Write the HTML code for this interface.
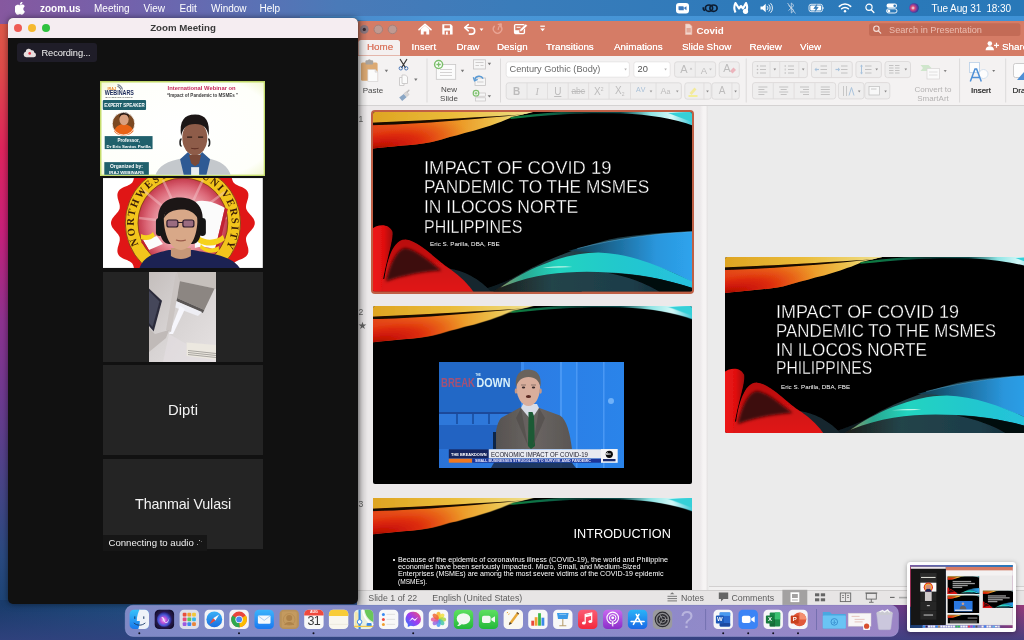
<!DOCTYPE html>
<html><head><meta charset="utf-8"><title>Screen</title>
<style>
*{margin:0;padding:0;box-sizing:border-box}
html,body{width:1024px;height:640px;overflow:hidden}
body{position:relative;font-family:"Liberation Sans",sans-serif;background:#3a4a8c;color:#fff}
.abs{position:absolute}
#pp,#zoom,#menubar,#dockt{will-change:transform}
#wall{left:0;top:0;width:1024px;height:640px;background:
 linear-gradient(90deg,rgba(0,0,0,0) 0,rgba(0,0,0,0) 100%),
 linear-gradient(180deg,#dc5a48 3%,#e04a4a 11%,#e0245c 23%,#c8207a 36%,#8e3290 50%,#6e3a90 62%,#4a4488 75%,#2a4a80 87%,#184272 97%);}
#wallb{left:0;top:600px;width:1024px;height:40px;background:linear-gradient(180deg,rgba(52,66,128,0) 15%,rgba(52,66,128,.8) 100%),linear-gradient(90deg,#1a3c6c 0,#1e4a7c 12%,#2a4a84 40%,#3b3f86 70%,#6a3a86 88%,#943a7a 100%)}
#wallt{left:0;top:0;width:1024px;height:24px;background:linear-gradient(90deg,#86589f 0,#7262ac 13%,#5c70b4 24%,#4a7ab8 33%,#3a7cba 50%,#2d7aba 75%,#2878b8 100%)}
/* menubar */
#menubar{left:0;top:0;width:1024px;height:16px;font-size:10px;line-height:17px;color:#fff;white-space:nowrap}
#menubar span{position:absolute;top:0}
/* zoom window */
#zoom{left:8px;top:18px;width:349.500px;height:585.500px;background:#111;border-radius:5px;overflow:hidden;box-shadow:0 0 6px rgba(0,0,0,.5)}
#ztitle{left:0;top:0;width:350px;height:20px;background:#f5edf1;color:#3a3a3a;font-weight:bold;font-size:9.700px;line-height:20px;text-align:center}
.tl{position:absolute;top:5.500px;width:8.400px;height:8.400px;border-radius:50%}
.tile{position:absolute;left:95px;width:160px;height:90px;background:#242424}
/* ppt */
#ppt{left:357px;top:20px;width:680px;height:585px;background:#ebebeb;border-radius:5px 0 0 0;overflow:hidden}
#ptitle{left:0;top:0;width:680px;height:36px;background:#d57c66}
#ribbon{left:0;top:36px;width:680px;height:50px;background:#f4f2f2;border-bottom:1px solid #d4d2d2}
#panel{left:0;top:86px;width:350px;height:484px;background:#ece9ea}
#status{left:0;top:570px;width:680px;height:15px;background:#e7e5e5;border-top:1px solid #cfcdcd;color:#666;font-size:8.5px;line-height:14px}
.pt{font-size:10.500px;line-height:19px;color:#fff;white-space:nowrap}
.tb{top:38px;font-size:9.850px;line-height:17px;color:#fff;white-space:nowrap;text-shadow:0 0 .5px #fff}
.rl{font-size:8px;line-height:11px;color:#4a4a4a;text-align:center;white-space:nowrap}
.rb{font-size:10px;line-height:15px;color:#bdbcbc;text-align:center;white-space:nowrap}
.st{white-space:nowrap;line-height:1;transform-origin:left center;font-family:'Liberation Sans',sans-serif}
.sn{font-size:8.600px;line-height:11px;color:#666}
.ss{top:590.500px;font-size:8.800px;line-height:14px;color:#5c5c5c;white-space:nowrap}
/* dock */
#dock{left:125px;top:606px;width:774px;height:31px;border-radius:8px;background:rgba(150,150,215,.78);border:1px solid rgba(200,200,240,.35)}
</style></head><body>
<!--SBG-->
<svg width="0" height="0" style="position:absolute"><defs>
<linearGradient id="gtl" gradientUnits="userSpaceOnUse" x1="0" y1="0" x2="160" y2="0"><stop offset="0" stop-color="#e2401a"/><stop offset=".3" stop-color="#ea6a1a"/><stop offset=".55" stop-color="#ec9a28"/><stop offset=".75" stop-color="#ecbe48"/><stop offset=".92" stop-color="#eedc80"/><stop offset="1" stop-color="#e8e0a0"/></linearGradient>
<radialGradient id="gtl2" gradientUnits="userSpaceOnUse" cx="0" cy="0" r="1" gradientTransform="translate(-8 42) rotate(-13) scale(105 27)"><stop offset="0" stop-color="#8a0a02"/><stop offset=".3" stop-color="#c81406"/><stop offset=".55" stop-color="#dc240a" stop-opacity=".85"/><stop offset=".8" stop-color="#e4400e" stop-opacity=".4"/><stop offset="1" stop-color="#e8601a" stop-opacity="0"/></radialGradient>
<linearGradient id="gtl3" gradientUnits="userSpaceOnUse" x1="0" y1="0" x2="160" y2="0"><stop offset="0" stop-color="#dea422"/><stop offset=".5" stop-color="#eabc3a"/><stop offset=".85" stop-color="#eed470"/><stop offset="1" stop-color="#eee094"/></linearGradient>
<linearGradient id="gtr" x1="0" y1="0" x2="1" y2="0"><stop offset="0" stop-color="#12803e"/><stop offset=".2" stop-color="#0e6a48"/><stop offset=".36" stop-color="#0a3a34"/><stop offset=".6" stop-color="#0c4a4a"/><stop offset=".76" stop-color="#8ee4e4"/><stop offset=".88" stop-color="#d4f8f8"/><stop offset="1" stop-color="#30c4d4"/></linearGradient>
<linearGradient id="gbl1" x1="0" y1="0" x2="1" y2="0"><stop offset="0" stop-color="#f01818"/><stop offset=".6" stop-color="#e01010"/><stop offset="1" stop-color="#a00c0c"/></linearGradient>
<linearGradient id="gbl2" x1="0" y1="0" x2="0" y2="1"><stop offset="0" stop-color="#b80e0e"/><stop offset=".5" stop-color="#d01212"/><stop offset="1" stop-color="#e21616"/></linearGradient>
<linearGradient id="gbr1" x1="0" y1="0" x2="1" y2="0"><stop offset="0" stop-color="#123a4a"/><stop offset=".35" stop-color="#1c6a98"/><stop offset=".7" stop-color="#2a96dc"/><stop offset="1" stop-color="#2ea4ee"/></linearGradient>
<linearGradient id="gbr2" x1="0" y1="0" x2="1" y2="0"><stop offset="0" stop-color="#8a9a6a"/><stop offset=".12" stop-color="#2aa890"/><stop offset=".3" stop-color="#22d4c0"/><stop offset=".6" stop-color="#20c8cc"/><stop offset="1" stop-color="#28c0e0"/></linearGradient>
<linearGradient id="gbr3" x1="0" y1="0" x2="1" y2="0"><stop offset="0" stop-color="#1a1a16"/><stop offset=".3" stop-color="#24444a"/><stop offset=".7" stop-color="#1c3c48"/><stop offset="1" stop-color="#0c2028"/></linearGradient>
<linearGradient id="gtent" x1="0" y1="0" x2="0" y2="1"><stop offset="0" stop-color="#240404"/><stop offset=".55" stop-color="#4a0808"/><stop offset="1" stop-color="#a00e0e"/></linearGradient>
<filter id="b1" x="-5%" y="-5%" width="110%" height="110%"><feGaussianBlur stdDeviation=".8"/></filter>
<filter id="b2" x="-30%" y="-30%" width="160%" height="160%"><feGaussianBlur stdDeviation="1.600"/></filter>
<clipPath id="sclip"><rect width="320" height="180"/></clipPath>
<symbol id="sbgt" viewBox="0 0 320 180" preserveAspectRatio="none">
<rect width="320" height="180" fill="#000"/>
<g clip-path="url(#sclip)">
<g filter="url(#b1)">
<path d="M-2 -2H170C160 0 152 2 140 5C134 7.500 130 9.500 125 11C120 13 115 14.500 110 16C104 18 98 19.500 92 21C87 22.500 82 24 77 25C71 26.800 65 28.600 59 30C49 32 40 32.800 30 33.500C20 34.500 10 35.500 -2 36.800Z" fill="url(#gtl)"/>
<path d="M-2 -2H170C160 0 152 2 140 5C134 7.500 130 9.500 125 11C120 13 115 14.500 110 16C104 18 98 19.500 92 21C87 22.500 82 24 77 25C71 26.800 65 28.600 59 30C49 32 40 32.800 30 33.500C20 34.500 10 35.500 -2 36.800Z" fill="url(#gtl2)"/>
<path d="M-2 -2H170C160 0 155 1.500 150 2.500C100 5.500 40 9.500 -2 11Z" fill="url(#gtl3)"/>
<path d="M-2 10.800C40 9 95 5.800 150 2.500C100 7.500 40 12.600 -2 13.200z" fill="#140700"/>
<path d="M138 5C165 1.500 195 -1 230 -2H322V14C302 6.500 277 2.600 250 1.600C215 .3 180 2.500 138 7z" fill="url(#gtr)"/>
<path d="M296 1l24 9v-10z" fill="#35d0d8"/>
</g>
</g>
</symbol>
<symbol id="sbg" viewBox="0 0 320 180" preserveAspectRatio="none">
<use href="#sbgt" width="320" height="180"/>
<g clip-path="url(#sclip)">
<!-- bottom left -->
<g filter="url(#b1)">
<path d="M96 182C120 176 140 168 160 156L200 150 210 182z" fill="#101a20"/><path d="M76 157C90 159 106 166 120 182H98C94 172 86 164 76 157Z" fill="#17272e"/>
<path d="M-2 182V172C30 158 75 160 102 182z" fill="#dc1414"/>
<path d="M10 182C12 150 20 127 33 128C48 130 62 148 78 158C88 165 96 173 102 182Z" fill="url(#gbl2)"/>
<path d="M-2 118C5 112 16 112 19.500 120C21 130 12 150 8 182H-2Z" fill="url(#gbl1)"/>
</g>
<path d="M13 170C17 152 24 137 33 136.500C44 138.500 57 150 69 159C50 160 30 164 13 170Z" fill="#3c0808" filter="url(#b2)"/>
<!-- bottom right -->
<g filter="url(#b1)">
<path d="M118 182C150 158 190 140 237 128C265 122.500 295 120.500 322 120V182Z" fill="url(#gbr3)"/>
<path d="M196 139.500C237 127.500 290 121 322 120V172C295 156 250 140 196 139.500Z" fill="url(#gbr1)"/><path d="M205 137C245 126.500 290 121 322 120" fill="none" stroke="#6ec4ee" stroke-opacity=".55" stroke-width=".7"/>
<path d="M128 176C150 160 190 141 226 141C262 142 295 158 322 171V177C292 167 262 162 237 161C200 159 165 161 128 176Z" fill="url(#gbr2)"/>
<path d="M236 161.500C262 162 292 167 322 177V182H290C275 172 255 165 236 161.500z" fill="#04080a"/>
<path d="M170 156C185 154.500 195 154.500 200 155.500C190 156 180 156.500 170 156z" fill="#baf4e8"/>
</g>
</g>
</symbol>
</defs></svg>
<!--/SBG-->
<div id="wall" class="abs"></div>
<div id="wallb" class="abs"></div>
<div id="wallt" class="abs"></div>
<!--MENUBAR-->
<div id="menubar" class="abs">
<svg class="abs" style="left:15px;top:1.5px" width="11" height="13" viewBox="0 0 170 200"><path fill="#fff" d="M150 68c-9 6-22 18-22 41 0 27 23 37 24 37-1 3-5 16-15 29-8 11-17 23-30 23s-17-8-32-8-20 8-32 8-21-11-31-25C1 157-8 130-8 104c0-41 27-63 53-63 14 0 26 9 34 9s21-10 37-10c6 0 27 1 34 28zM105 28c6-8 11-18 11-29v-4c-11 0-23 7-31 16-6 7-11 17-11 28l1 4c11 1 23-6 30-15z"/></svg>
<span style="left:40px;font-weight:bold">zoom.us</span>
<span style="left:94px">Meeting</span>
<span style="left:143.5px">View</span>
<span style="left:179.5px">Edit</span>
<span style="left:211px">Window</span>
<span style="left:259.5px">Help</span>
<svg class="abs" style="left:660px;top:0" width="270" height="16" viewBox="0 0 270 16">
<!-- zoom cam -->
<rect x="16" y="3" width="13" height="10.5" rx="3" fill="#fff"/><path d="M18.5 6.2h4.3a1 1 0 0 1 1 1v3h-4.3a1 1 0 0 1-1-1zM24.3 7.6l2.2-1.4v4l-2.2-1.4z" fill="#3a78be"/>
<!-- CC -->
<g fill="none" stroke="#0d1c30" stroke-width="1.7"><ellipse cx="49" cy="8.2" rx="3.6" ry="3.2"/><ellipse cx="53.5" cy="8.2" rx="3.6" ry="3.2"/><path d="M45 10.5c-1.5-.3-2-1.800-1.500-3.200"/></g>
<!-- malwarebytes -->
<path d="M75.500 12.500c-1.500-3-1.500-6.500 0-9.500l3.500 5.500 2-2.500 2 2.500 3-5.500c1.500 3 1.300 5.500.5 7.500" fill="none" stroke="#fff" stroke-width="2.100" stroke-linejoin="round"/><circle cx="85.500" cy="11.300" r="2.600" fill="#fff"/>
<!-- volume -->
<path d="M100.500 6.500h2.200l3-2.700v8.400l-3-2.700h-2.200z" fill="#fff"/><path d="M107.300 6.200a2.500 2.500 0 0 1 0 3.600M109 4.800a4.600 4.600 0 0 1 0 6.400M110.800 3.500a6.500 6.500 0 0 1 0 9" fill="none" stroke="#fff" stroke-width=".9" stroke-linecap="round"/>
<!-- bluetooth off -->
<path d="M128.500 5.500l5.500 5-2.700 2.500v-10l2.700 2.500-5.500 5" fill="none" stroke="#c8d8ea" stroke-width=".8"/><path d="M127.500 3l8 10.500" stroke="#c8d8ea" stroke-width=".8"/>
<!-- battery -->
<rect x="149" y="4.300" width="13.500" height="7.400" rx="2" fill="none" stroke="#e8eef6" stroke-width=".9"/><rect x="150.300" y="5.600" width="10.900" height="4.800" rx="1" fill="#fff"/><path d="M163.300 6.700v2.600c.9-.2.900-2.400 0-2.600z" fill="#e8eef6"/><path d="M156.800 4.500l-3 4h2.200l-1 3 3.200-4.200H156z" fill="#2c76b6" stroke="#2c76b6" stroke-width=".6"/>
<!-- wifi -->
<g fill="none" stroke="#fff" stroke-width="1.500" stroke-linecap="round"><path d="M179.300 6.400a8 8 0 0 1 11.400 0"/><path d="M181.600 8.800a4.800 4.800 0 0 1 6.800 0"/></g><circle cx="185" cy="11.300" r="1.200" fill="#fff"/>
<!-- search -->
<circle cx="209" cy="7.300" r="3.100" fill="none" stroke="#fff" stroke-width="1.200"/><path d="M211.300 9.700l2.600 2.800" stroke="#fff" stroke-width="1.300" stroke-linecap="round"/>
<!-- control center -->
<rect x="226.500" y="3.600" width="10.500" height="4.200" rx="2.100" fill="#fff"/><circle cx="234.700" cy="5.700" r="1.300" fill="#2c76b6"/><rect x="226.500" y="8.800" width="10.500" height="4.200" rx="2.100" fill="none" stroke="#fff" stroke-width=".9"/><circle cx="228.800" cy="10.900" r="1.500" fill="#fff"/>
<!-- siri -->
<defs><radialGradient id="siri" cx=".4" cy=".5" r=".6"><stop offset="0" stop-color="#f2f2f8"/><stop offset=".35" stop-color="#d94a78"/><stop offset=".7" stop-color="#6a3aa0"/><stop offset="1" stop-color="#2a3a88"/></radialGradient></defs>
<circle cx="254" cy="8" r="4.800" fill="url(#siri)"/>
</svg>
<span style="left:931.500px;letter-spacing:-.12px">Tue Aug 31&nbsp; 18:30</span>
</div>
<!--PPT-->
<div id="ppt" class="abs">
<div id="ptitle" class="abs"></div>
<div id="ribbon" class="abs"></div>
<div id="panel" class="abs"></div>
<div class="abs" style="left:343px;top:86px;width:8px;height:484px;background:linear-gradient(90deg,#ece9ea,#f6f4f4 40%,#f6f4f4 70%,#e2e0e0)"></div>
<div id="eline" class="abs" style="left:352px;top:566px;width:330px;height:4px;background:#f1f0f0;border-top:1px solid #d2d0d0"></div>
<div id="status" class="abs"></div>
</div>
<div id="wallt2" class="abs" style="left:300px;top:16px;width:724px;height:5px;background:linear-gradient(90deg,#4a86c8,#4a96d6 20%,#3f92d6 100%)"></div>
<div id="pp" class="abs" style="left:0;top:0;width:1024px;height:640px;overflow:hidden;pointer-events:none">
<!--PPTITLE-->
<svg class="abs" style="left:357px;top:20px" width="667" height="36" viewBox="357 20 667 36">
<!-- window buttons -->
<circle cx="364.300" cy="29.400" r="4.300" fill="#8d7a82"/><circle cx="364.300" cy="29.400" r="1.600" fill="#3a2c34"/>
<circle cx="378.300" cy="29.400" r="4.300" fill="#bf9a92"/><circle cx="392.500" cy="29.400" r="4.300" fill="#bf9a92"/>
<circle cx="378.300" cy="29.400" r="4.300" fill="none" stroke="#a57f78" stroke-width="1"/><circle cx="392.500" cy="29.400" r="4.300" fill="none" stroke="#a57f78" stroke-width="1"/>
<!-- home -->
<path d="M419 29.700l6-5.400 6 5.400" fill="none" stroke="#fff" stroke-width="1.600" stroke-linejoin="round" stroke-linecap="round"/><path d="M420.800 29.300l4.200-3.700 4.200 3.700v5.300h-2.900v-3.200h-2.600v3.200h-2.900z" fill="#fff"/>
<!-- save -->
<path d="M442.300 24.200h8.600l1.700 1.700v8.700h-10.300z" fill="#fff"/><rect x="444.300" y="25.300" width="5.600" height="2.900" fill="#d67a63"/><rect x="444.600" y="30.600" width="5.400" height="4" fill="#d67a63"/><rect x="446" y="31.600" width="1.800" height="3" fill="#fff"/>
<!-- undo -->
<path d="M466 27.700h5.500a3.200 3.200 0 0 1 0 6.400h-2.200" fill="none" stroke="#fff" stroke-width="1.600" stroke-linecap="round"/><path d="M468.300 24.600l-3.600 3.100 3.600 3.100" fill="none" stroke="#fff" stroke-width="1.600" stroke-linecap="round" stroke-linejoin="round"/>
<path d="M479.600 28.600h3.800l-1.900 2.400z" fill="#fff"/>
<!-- redo faded -->
<path d="M494.300 26.300a4.200 4.200 0 1 0 6.500 0" fill="none" stroke="#e9a595" stroke-width="1.400" stroke-linecap="round"/><path d="M498.200 24.300l3-0.300-.1 3.100" fill="none" stroke="#e9a595" stroke-width="1.300" stroke-linecap="round" stroke-linejoin="round"/><path d="M501 24.300c-1.500 1.200-2.500 3-2.800 5" fill="none" stroke="#e9a595" stroke-width="1.300" stroke-linecap="round"/>
<!-- edit -->
<rect x="514.600" y="24.600" width="9.800" height="9" rx="1" fill="none" stroke="#fff" stroke-width="1.400"/><rect x="515" y="30.200" width="4.500" height="3.200" fill="#fff"/><path d="M519.300 31.800l.8-2.600 5.600-5.200 1.800 1.800-5.600 5.200z" fill="#fff" stroke="#d67a63" stroke-width=".6"/><path d="M516.500 27.300h4" stroke="#fff" stroke-width="1"/>
<!-- customize -->
<path d="M540.300 26.200h4.600" stroke="#fff" stroke-width="1.200"/><path d="M540.300 28.400h4.600l-2.300 2.800z" fill="#fff"/>
<!-- doc icon -->
<path d="M685.500 24h4l2.300 2.300v8.200h-6.300z" fill="#f3d6cd" stroke="#e9bfb3" stroke-width=".6"/><path d="M686.500 28h4.300v4.500h-4.300z" fill="#e2a898"/>
<!-- search box -->
<rect x="869" y="23.300" width="151.500" height="12.600" rx="2.500" fill="#c36b56"/>
<circle cx="876.400" cy="28.700" r="2.700" fill="none" stroke="#f6e0da" stroke-width="1.100"/><path d="M878.400 30.800l2.300 2.400" stroke="#f6e0da" stroke-width="1.200" stroke-linecap="round"/>
<!-- home tab -->
<path d="M358.500 55.500v-13a2.500 2.500 0 0 1 2.500-2.500h36.500a2.500 2.500 0 0 1 2.500 2.500v13z" fill="#f4f0f0"/>
<!-- share icon -->
<circle cx="989.800" cy="43.600" r="2.300" fill="#fff"/><path d="M985.600 50.300c0-2.600 1.800-4 4.200-4s4.200 1.400 4.200 4z" fill="#fff"/><path d="M996.500 42.800v5M994 45.300h5" stroke="#fff" stroke-width="1.200"/>
</svg>
<div class="abs pt" style="left:696.500px;top:20.500px;font-weight:bold;font-size:9.800px">Covid</div>
<div class="abs pt" style="left:889px;top:20.700px;color:#ecbdb0;font-size:9.200px">Search in Presentation</div>
<div class="abs tb" style="left:367px;color:#db7862;text-shadow:0 0 .5px #db7862">Home</div>
<div class="abs tb" style="left:411.500px">Insert</div>
<div class="abs tb" style="left:456.500px">Draw</div>
<div class="abs tb" style="left:497px">Design</div>
<div class="abs tb" style="left:546px">Transitions</div>
<div class="abs tb" style="left:614px">Animations</div>
<div class="abs tb" style="left:682px">Slide Show</div>
<div class="abs tb" style="left:749.500px">Review</div>
<div class="abs tb" style="left:800px">View</div>
<div class="abs tb" style="left:1002px">Share</div>
<!--PPRIBBON-->
<svg class="abs" style="left:357px;top:56px" width="667" height="50" viewBox="357 56 667 50">
<rect x="361" y="62.500" width="16.600" height="18.300" rx="1.500" fill="#dcaa74"/><rect x="365.500" y="60.300" width="7.600" height="4.200" rx="1" fill="#a8a4a0"/><circle cx="369.300" cy="60.800" r="1.500" fill="#a8a4a0"/><path d="M367.800 69.500h7.300l2.700 2.700v9.300h-10z" fill="#fbfbfb" stroke="#d0cccc" stroke-width=".6"/><path d="M375.100 69.500v2.700h2.700" fill="#e6e4e4" stroke="#d0cccc" stroke-width=".5"/>
<path d="M384.7 69.8h3.4l-1.7 2.4z" fill="#777"/>
<path d="M400.300 59.500l5 8M406.700 59.500l-5 8" stroke="#333" stroke-width="1.200" stroke-linecap="round"/><circle cx="400.800" cy="68.300" r="1.700" fill="none" stroke="#4a78b8" stroke-width="1"/><circle cx="406.200" cy="68.300" r="1.700" fill="none" stroke="#4a78b8" stroke-width="1"/>
<path d="M399.500 77.500h4.500v8h-4.500z" fill="#fafafa" stroke="#c4c2c2" stroke-width=".8"/><path d="M402 75h3.500l2 2v6.500h-5.500z" fill="#fafafa" stroke="#c4c2c2" stroke-width=".8"/>
<path d="M414.1 78.5h3.4l-1.7 2.4z" fill="#777"/>
<path d="M399.200 97.500l4.500-3.500 2.800 3.200-4.300 3.800z" fill="#8aa6c4"/><path d="M404 93.600l2.500-2 2.600 3-2.400 2.100z" fill="#d8d6d6" stroke="#bcbaba" stroke-width=".5"/><path d="M407.300 92l1.600-1.800" stroke="#bcbaba" stroke-width="1.400" stroke-linecap="round"/>
<path d="M427 58.500v44" stroke="#dcdada" stroke-width="1"/>
<rect x="436.300" y="64.500" width="19.400" height="14.800" fill="#fbfbfb" stroke="#c8c6c6" stroke-width=".8"/><path d="M440 69.500h12M440 72.500h12M440 75.500h12" stroke="#cfcdcd" stroke-width=".9"/><circle cx="438.600" cy="64.500" r="4" fill="#fff" stroke="#7cbf6c" stroke-width="1.500"/><path d="M438.600 62.300v4.400M436.400 64.500h4.400" stroke="#7cbf6c" stroke-width="1.300"/>
<path d="M460.8 69.8h3.4l-1.7 2.4z" fill="#777"/>
<rect x="473.500" y="59.800" width="12" height="9.200" fill="#f6f6f6" stroke="#c6c4c4" stroke-width=".8"/><path d="M475.500 62.500h8M475.500 65.500h3.500M480.500 65.500h3" stroke="#cfcdcd" stroke-width="1"/>
<path d="M487.7 62.8h3.4l-1.7 2.4z" fill="#777"/>
<rect x="475" y="78" width="10.500" height="7.500" fill="#f6f6f6" stroke="#c6c4c4" stroke-width=".8"/><path d="M477 82h6.500" stroke="#cfcdcd" stroke-width="1"/><path d="M474.800 79.800c.5-4 6.500-5 8.200-1.200" fill="none" stroke="#5a9ad4" stroke-width="1.500"/><path d="M473.300 77.300l1.200 3.600 3.200-1.600" fill="none" stroke="#5a9ad4" stroke-width="1.300"/>
<rect x="475.500" y="93" width="10" height="3.200" fill="#f6f6f6" stroke="#c6c4c4" stroke-width=".7"/><rect x="475.500" y="97.800" width="10" height="3.200" fill="#f6f6f6" stroke="#c6c4c4" stroke-width=".7"/><circle cx="476" cy="93.200" r="2.800" fill="#fff" stroke="#7cbf6c" stroke-width="1.200"/><path d="M476 91.700v3M474.500 93.200h3" stroke="#7cbf6c" stroke-width="1"/>
<path d="M487.7 95.2h3.4l-1.7 2.4z" fill="#777"/>
<path d="M500.5 58.500v44" stroke="#dcdada" stroke-width="1"/>
<rect x="506.200" y="61.800" width="123.200" height="15.400" rx="2.500" fill="#fff" stroke="#e2e0e0" stroke-width=".8"/>
<path d="M624.3 68.5h2.6l-1.3 2.0z" fill="#b5b3b3"/>
<rect x="633.800" y="61.800" width="36.400" height="15.400" rx="2.500" fill="#fff" stroke="#e2e0e0" stroke-width=".8"/>
<path d="M664.3 68.5h2.6l-1.3 2.0z" fill="#b5b3b3"/>
<rect x="674.6" y="61.8" width="41.0" height="15.4" rx="2.500" fill="#efeeee" stroke="#d9d7d7" stroke-width=".8"/><path d="M695.3 61.8v15.4" stroke="#dddbdb" stroke-width=".8"/>
<rect x="719.2" y="61.8" width="20.1" height="15.4" rx="2.500" fill="#efeeee" stroke="#d9d7d7" stroke-width=".8"/>
<path d="M689.7 69.5h2.6l-1.3 -2.0z" fill="#bdbcbc"/>
<path d="M709.2 68.5h2.6l-1.3 2.0z" fill="#bdbcbc"/>
<path d="M730 71l3.500-3.500 2.500 2.500-3.500 3.500z" fill="#ecb4bc"/>
<rect x="506.2" y="82.8" width="175.2" height="16.4" rx="2.500" fill="#efeeee" stroke="#d9d7d7" stroke-width=".8"/><path d="M527 82.8v16.4" stroke="#dddbdb" stroke-width=".8"/><path d="M547.5 82.8v16.4" stroke="#dddbdb" stroke-width=".8"/><path d="M568.2 82.8v16.4" stroke="#dddbdb" stroke-width=".8"/><path d="M588.6 82.8v16.4" stroke="#dddbdb" stroke-width=".8"/><path d="M609 82.8v16.4" stroke="#dddbdb" stroke-width=".8"/><path d="M630.5 82.8v16.4" stroke="#dddbdb" stroke-width=".8"/><path d="M656 82.8v16.4" stroke="#dddbdb" stroke-width=".8"/>
<path d="M649.7 90.5h2.6l-1.3 2.0z" fill="#9a9898"/>
<path d="M676.0 90.5h2.6l-1.3 2.0z" fill="#9a9898"/>
<rect x="684.8" y="82.8" width="26.4" height="16.4" rx="2.500" fill="#efeeee" stroke="#d9d7d7" stroke-width=".8"/><path d="M703.9 82.8v16.4" stroke="#dddbdb" stroke-width=".8"/>
<rect x="711.9" y="82.8" width="27.4" height="16.4" rx="2.500" fill="#efeeee" stroke="#d9d7d7" stroke-width=".8"/><path d="M731.9 82.8v16.4" stroke="#dddbdb" stroke-width=".8"/>
<path d="M706.2 90.5h2.6l-1.3 2.0z" fill="#8a8888"/>
<path d="M734.3 90.5h2.6l-1.3 2.0z" fill="#8a8888"/>
<path d="M689.500 93l5-5.500 2 2-5 5.500z" fill="#f3ea9c"/><rect x="688.500" y="95" width="9" height="2" fill="#f3ee9a"/>
<path d="M746.2 58.500v44" stroke="#dcdada" stroke-width="1"/>
<rect x="752.5" y="61.5" width="54.9" height="16.1" rx="2.500" fill="#efeeee" stroke="#d9d7d7" stroke-width=".8"/><path d="M770 61.5v16.1" stroke="#dddbdb" stroke-width=".8"/><path d="M779.7 61.5v16.1" stroke="#dddbdb" stroke-width=".8"/><path d="M798.8 61.5v16.1" stroke="#dddbdb" stroke-width=".8"/>
<path d="M773.5 68.5h2.6l-1.3 2.0z" fill="#8a8888"/>
<path d="M801.9 68.5h2.6l-1.3 2.0z" fill="#8a8888"/>
<circle cx="757.500" cy="66" r=".8" fill="#bdbcbc"/><path d="M760 66h6" stroke="#bdbcbc" stroke-width=".9"/>
<path d="M785.200 65v2" stroke="#bdbcbc" stroke-width=".8"/><path d="M788 66h6" stroke="#bdbcbc" stroke-width=".9"/>
<circle cx="757.500" cy="69.5" r=".8" fill="#bdbcbc"/><path d="M760 69.5h6" stroke="#bdbcbc" stroke-width=".9"/>
<path d="M785.200 68.5v2" stroke="#bdbcbc" stroke-width=".8"/><path d="M788 69.5h6" stroke="#bdbcbc" stroke-width=".9"/>
<circle cx="757.500" cy="73" r=".8" fill="#bdbcbc"/><path d="M760 73h6" stroke="#bdbcbc" stroke-width=".9"/>
<path d="M785.200 72v2" stroke="#bdbcbc" stroke-width=".8"/><path d="M788 73h6" stroke="#bdbcbc" stroke-width=".9"/>
<rect x="811.5" y="61.5" width="40.8" height="16.1" rx="2.500" fill="#efeeee" stroke="#d9d7d7" stroke-width=".8"/><path d="M831.5 61.5v16.1" stroke="#dddbdb" stroke-width=".8"/>
<path d="M820.5 66h6.500" stroke="#bdbcbc" stroke-width=".9"/>
<path d="M820.5 69.5h6.500" stroke="#bdbcbc" stroke-width=".9"/>
<path d="M820.5 73h6.500" stroke="#bdbcbc" stroke-width=".9"/>
<path d="M815.0 69.500h4" stroke="#a9c3dc" stroke-width="1.200"/>
<path d="M816.5 67.500l-2 2 2 2z" fill="#a9c3dc"/>
<path d="M841 66h6.500" stroke="#bdbcbc" stroke-width=".9"/>
<path d="M841 69.5h6.500" stroke="#bdbcbc" stroke-width=".9"/>
<path d="M841 73h6.500" stroke="#bdbcbc" stroke-width=".9"/>
<path d="M835.5 69.500h4" stroke="#a9c3dc" stroke-width="1.200"/>
<path d="M838 67.500l2 2-2 2z" fill="#a9c3dc"/>
<rect x="855.9" y="61.5" width="25.5" height="16.1" rx="2.500" fill="#efeeee" stroke="#d9d7d7" stroke-width=".8"/>
<path d="M875.4 68.5h2.6l-1.3 2.0z" fill="#8a8888"/>
<path d="M861.500 65v9" stroke="#a9c3dc" stroke-width="1"/><path d="M860 66.500l1.500-2 1.500 2zM860 72.500l1.500 2 1.500-2z" fill="#a9c3dc"/>
<path d="M865 66h6.500" stroke="#bdbcbc" stroke-width=".9"/>
<path d="M865 69.5h6.500" stroke="#bdbcbc" stroke-width=".9"/>
<path d="M865 73h6.500" stroke="#bdbcbc" stroke-width=".9"/>
<rect x="885" y="61.5" width="25.5" height="16.1" rx="2.500" fill="#efeeee" stroke="#d9d7d7" stroke-width=".8"/>
<path d="M904.5 68.5h2.6l-1.3 2.0z" fill="#8a8888"/>
<path d="M889 65.5h4.500M895 65.5h4.500" stroke="#bdbcbc" stroke-width=".9"/>
<path d="M889 68h4.500M895 68h4.500" stroke="#bdbcbc" stroke-width=".9"/>
<path d="M889 70.5h4.500M895 70.5h4.500" stroke="#bdbcbc" stroke-width=".9"/>
<path d="M889 73h4.500M895 73h4.500" stroke="#bdbcbc" stroke-width=".9"/>
<rect x="752.5" y="82.6" width="83.2" height="16.3" rx="2.500" fill="#efeeee" stroke="#d9d7d7" stroke-width=".8"/><path d="M773.3 82.6v16.3" stroke="#dddbdb" stroke-width=".8"/><path d="M794.1 82.6v16.3" stroke="#dddbdb" stroke-width=".8"/><path d="M814.9 82.6v16.3" stroke="#dddbdb" stroke-width=".8"/>
<path d="M758.4 87h9" stroke="#bdbcbc" stroke-width=".9"/>
<path d="M758.4 89.5h6" stroke="#bdbcbc" stroke-width=".9"/>
<path d="M758.4 92h9" stroke="#bdbcbc" stroke-width=".9"/>
<path d="M758.4 94.5h6" stroke="#bdbcbc" stroke-width=".9"/>
<path d="M779.2 87h9" stroke="#bdbcbc" stroke-width=".9"/>
<path d="M780.7 89.5h6" stroke="#bdbcbc" stroke-width=".9"/>
<path d="M779.2 92h9" stroke="#bdbcbc" stroke-width=".9"/>
<path d="M780.7 94.5h6" stroke="#bdbcbc" stroke-width=".9"/>
<path d="M800.0 87h9" stroke="#bdbcbc" stroke-width=".9"/>
<path d="M803.0 89.5h6" stroke="#bdbcbc" stroke-width=".9"/>
<path d="M800.0 92h9" stroke="#bdbcbc" stroke-width=".9"/>
<path d="M803.0 94.5h6" stroke="#bdbcbc" stroke-width=".9"/>
<path d="M820.8 87h9" stroke="#bdbcbc" stroke-width=".9"/>
<path d="M820.8 89.5h9" stroke="#bdbcbc" stroke-width=".9"/>
<path d="M820.8 92h9" stroke="#bdbcbc" stroke-width=".9"/>
<path d="M820.8 94.5h9" stroke="#bdbcbc" stroke-width=".9"/>
<rect x="838.4" y="82.6" width="25.6" height="16.3" rx="2.500" fill="#efeeee" stroke="#d9d7d7" stroke-width=".8"/>
<path d="M857.9 90.5h2.6l-1.3 2.0z" fill="#8a8888"/>
<path d="M843.500 86v10M846.500 86v10" stroke="#bdbcbc" stroke-width=".8"/><path d="M849 95.500l2.500-8 2.500 8" fill="none" stroke="#a9c3dc" stroke-width="1"/>
<rect x="864.8" y="82.6" width="25.0" height="16.3" rx="2.500" fill="#efeeee" stroke="#d9d7d7" stroke-width=".8"/>
<path d="M884.3 90.5h2.6l-1.3 2.0z" fill="#8a8888"/>
<rect x="869" y="86.500" width="10.500" height="8.500" fill="#f8f8f8" stroke="#bdbcbc" stroke-width=".7"/><path d="M871 89h5.500" stroke="#bdbcbc" stroke-width=".8"/>
<path d="M920.500 65h8l3 3-3 3h-8l2.500-3z" fill="#cfe6cc"/><rect x="927" y="68.500" width="12.500" height="10.500" fill="#fafafa" stroke="#d6d4d4" stroke-width=".7"/><path d="M929 72h8.500M929 75h8.500" stroke="#dedcdc" stroke-width=".9"/>
<path d="M943.7 70.1h3.0l-1.5 2.2z" fill="#8a8888"/>
<path d="M959.6 58.500v44" stroke="#dcdada" stroke-width="1"/>
<rect x="969.500" y="62.500" width="10" height="10" fill="#fdfdfd" stroke="#b8cfe6" stroke-width=".8"/><circle cx="983.500" cy="74" r="4.500" fill="#fdfdfd" stroke="#c9d9ea" stroke-width=".8"/><path d="M970.300 81.500l4.700-12.500h1.600l4.700 12.500M972.200 77.500h7" fill="none" stroke="#4d8fd6" stroke-width="1.500"/>
<path d="M992.2 69.9h3.0l-1.5 2.2z" fill="#777"/>
<path d="M1005.7 58.500v44" stroke="#dcdada" stroke-width="1"/>
<rect x="1013.500" y="63.500" width="14" height="14" rx="2" fill="#fdfdfd" stroke="#c2c0c0" stroke-width=".8"/><path d="M1017 80l7-8v8z" fill="#4d8fd6"/>
</svg>
<div class="abs rl" style="left:357px;width:32px;top:85px">Paste</div>
<div class="abs rl" style="left:429px;width:40px;top:85px;line-height:8.700px;padding-top:1px">New<br>Slide</div>
<div class="abs rl" style="left:903px;width:60px;top:85px;line-height:8.300px;padding-top:1.300px;color:#b4b2b2">Convert to<br>SmartArt</div>
<div class="abs rl" style="left:961px;width:40px;top:85px;color:#3c3c3c;text-shadow:0 0 .2px #3c3c3c">Insert</div>
<div class="abs rl" style="left:1012.500px;top:85px;color:#3c3c3c;text-align:left;text-shadow:0 0 .4px #3c3c3c">Drawing</div>
<div class="abs" style="left:509.500px;top:62px;font-size:9.200px;line-height:15px;color:#6a6a6a;white-space:nowrap">Century Gothic (Body)</div>
<div class="abs" style="left:637.500px;top:62px;font-size:9.300px;line-height:15px;color:#555;white-space:nowrap">20</div>
<div class="abs rb" style="left:677px;top:62px;width:14px;font-size:11px">A</div>
<div class="abs rb" style="left:698px;top:63px;width:12px;font-size:9.500px">A</div>
<div class="abs rb" style="left:721px;top:61px;width:12px;font-size:11px">A</div>
<div class="abs rb" style="left:506px;top:83.500px;width:21px;font-weight:bold">B</div>
<div class="abs rb" style="left:527px;top:83.500px;width:20.500px;font-style:italic;font-family:'Liberation Serif',serif">I</div>
<div class="abs rb" style="left:547.500px;top:83.500px;width:20.500px;text-decoration:underline">U</div>
<div class="abs rb" style="left:568px;top:83.500px;width:20.500px;text-decoration:line-through;font-size:8.500px">abc</div>
<div class="abs rb" style="left:588.500px;top:83.500px;width:20.500px">X<span style="font-size:5px;position:relative;top:-4px">2</span></div>
<div class="abs rb" style="left:609px;top:83px;width:21.500px">X<span style="font-size:5px;position:relative;top:2px">2</span></div>
<div class="abs rb" style="left:630.500px;top:82px;width:21px;font-size:7px;letter-spacing:.5px;color:#a8c0d8">AV</div>
<div class="abs rb" style="left:656px;top:84px;width:19px;font-size:9px">A<span style="font-size:7px">a</span></div>
<div class="abs rb" style="left:714px;top:82.500px;width:16px;font-size:10px">A</div>
<!--PPSLIDES-->
<div class="abs" style="left:370.800px;top:110.200px;width:323.400px;height:183.600px;border-radius:4px;background:#bf5f45"></div>
<svg class="abs" style="left:373px;top:112.4px;border-radius:2px" width="319" height="179.4"><use href="#sbg" width="319" height="179.4"/></svg>
<div class="abs st" style="left:423.9px;top:158.63px;font-size:18.4px;transform:scaleX(1.0002);color:#fff;-webkit-text-stroke:.3px #000">IMPACT OF COVID 19</div>
<div class="abs st" style="left:423.9px;top:178.33px;font-size:18.4px;transform:scaleX(0.9395);color:#fff;-webkit-text-stroke:.3px #000">PANDEMIC TO THE MSMES</div>
<div class="abs st" style="left:423.9px;top:198.03px;font-size:18.4px;transform:scaleX(0.9516);color:#fff;-webkit-text-stroke:.3px #000">IN ILOCOS NORTE</div>
<div class="abs st" style="left:423.9px;top:217.73px;font-size:18.4px;transform:scaleX(0.8664);color:#fff;-webkit-text-stroke:.3px #000">PHILIPPINES</div>
<div class="abs st" style="left:429.8px;top:241.20px;font-size:6.2px;transform:scaleX(1.0134);transform-origin:left center;color:#fff">Eric S. Parilla, DBA, FBE</div>
<div class="abs sn" style="left:358.500px;top:113.500px">1</div>
<div class="abs sn" style="left:358.500px;top:306.500px">2</div>
<div class="abs sn" style="left:357.500px;top:319.500px;font-size:9.500px">★</div>
<div class="abs sn" style="left:358.500px;top:498.500px">3</div>
<svg class="abs" style="left:373.2px;top:305.5px;border-radius:2px" width="319.3" height="178.6"><use href="#sbgt" width="319.3" height="178.6"/></svg>
<!--VIDEO-->
<svg class="abs" style="left:438.800px;top:362.300px" width="185.600" height="106" viewBox="0 0 185.600 106">
<defs>
<linearGradient id="vbg" x1="0" y1="0" x2="1" y2="0"><stop offset="0" stop-color="#2a72d6"/><stop offset=".45" stop-color="#2c7ce4"/><stop offset="1" stop-color="#2a84ea"/></linearGradient>
<linearGradient id="vsuit" x1="0" y1="0" x2="1" y2="0"><stop offset="0" stop-color="#565250"/><stop offset=".5" stop-color="#6a6562"/><stop offset="1" stop-color="#5a5654"/></linearGradient>
<filter id="vb" x="-10%" y="-10%" width="120%" height="120%"><feGaussianBlur stdDeviation=".5"/></filter>
</defs>
<rect width="185.600" height="106" fill="url(#vbg)"/>
<g filter="url(#vb)">
<rect x="0" y="0" width="82" height="50" fill="#2467c6"/>
<rect x="0" y="50" width="82" height="2" fill="#1a4a9a"/>
<rect x="0" y="52" width="60" height="11" fill="#2e78da"/>
<path d="M0 63h60v24h-60z" fill="#2264c2"/>
<path d="M18 52v10M34 52v10M50 52v10" stroke="#1c54aa" stroke-width="2"/>
<rect x="82" y="0" width="3" height="90" fill="#3a8cf0"/>
<rect x="121" y="0" width="2" height="106" fill="#4a98f4"/><rect x="137" y="0" width="1.500" height="106" fill="#4a98f4"/><rect x="164" y="0" width="1.500" height="106" fill="#4a98f4"/>
<rect x="123" y="0" width="14" height="106" fill="#2f86ec"/>
<circle cx="172" cy="39" r="3" fill="#8cc4ff" opacity=".7"/>
<!-- man -->
<path d="M55.500 87C56 74 57 62 62 56L81 45.500H99L121 53.500C128 58 131 72 133 87Z" fill="url(#vsuit)"/>
<path d="M82 46L92 58 100 46 98 42H84Z" fill="#d8dce6"/>
<path d="M89.500 50h4l1.500 4 1 30-4 3-3-3 .5-30z" fill="#1c5a34"/>
<path d="M82 46l-5 10 12 28zM100 46l6 10-12 28z" fill="#4e4a48" opacity=".6"/>
<path d="M77.500 27C77 16 82 11 89.500 11C97 11 101.500 16 101 27C100.500 36 96 44 89.500 44C83 44 78 36 77.500 27Z" fill="#d9ae9c"/><ellipse cx="77" cy="29" rx="1.300" ry="2.800" fill="#c89884"/><ellipse cx="101.500" cy="29" rx="1.300" ry="2.800" fill="#c89884"/>
<path d="M77 25C75.500 12 82 7 90 7.500C98 8 103 13 101.500 25C100 18.500 96 15 89.500 15C83 15 79 18.500 77 25Z" fill="#6a645c"/>
<ellipse cx="89.500" cy="34.500" rx="2.600" ry="1.500" fill="#5a2a22"/>
<ellipse cx="84.500" cy="25.500" rx="1.700" ry=".9" fill="#3a2a2a"/><ellipse cx="94.500" cy="25.500" rx="1.700" ry=".9" fill="#3a2a2a"/><path d="M82 23h5M92 23h5" stroke="#6a5a54" stroke-width=".7"/>
<rect x="54" y="70" width="3" height="17" fill="#10264a"/>
</g>
<!-- lower third -->
<rect x="9.800" y="87.300" width="40" height="9.200" fill="#14245e"/>
<rect x="49.800" y="87.300" width="112.200" height="9.200" fill="#e8eaf0"/>
<rect x="9.800" y="96.700" width="23.400" height="4" fill="#f07820"/>
<rect x="33.200" y="96.700" width="128.800" height="4" fill="#1c3498"/>
<rect x="162" y="87" width="16.700" height="13.800" fill="#f4f4f6"/>
<circle cx="170.300" cy="92.300" r="3.600" fill="#0a0a0a"/>
<rect x="164" y="97" width="12.500" height="2.300" fill="#1a2a6a"/>
<path d="M55 100.800h78l4 5.200H52z" fill="#1a2a4a" opacity=".85"/>
<text x="2" y="25.200" font-family="'Liberation Sans',sans-serif" font-weight="bold" font-size="12.500" fill="#d04a5a" opacity=".75" textLength="34" lengthAdjust="spacingAndGlyphs">BREAK</text>
<text x="37.500" y="25.200" font-family="'Liberation Sans',sans-serif" font-weight="bold" font-size="12.500" fill="#d8f0fa" textLength="34" lengthAdjust="spacingAndGlyphs">DOWN</text>
<text x="36.500" y="14.300" font-family="'Liberation Sans',sans-serif" font-weight="bold" font-size="2.600" fill="#d8f0fa">THE</text>
<text x="12" y="93.800" font-family="'Liberation Sans',sans-serif" font-weight="bold" font-size="4" fill="#fff" textLength="35.500" lengthAdjust="spacingAndGlyphs">THE BREAKDOWN</text>
<text x="52" y="94.700" font-family="'Liberation Sans',sans-serif" font-size="6.800" fill="#1a1a2a" textLength="97" lengthAdjust="spacingAndGlyphs">ECONOMIC IMPACT OF COVID-19</text>
<text x="36" y="100" font-family="'Liberation Sans',sans-serif" font-weight="bold" font-size="3.100" fill="#eef" textLength="116" lengthAdjust="spacingAndGlyphs">SMALL BUSINESSES STRUGGLING TO SURVIVE AMID PANDEMIC</text>
<text x="166.700" y="93.300" font-family="'Liberation Sans',sans-serif" font-weight="bold" font-size="3" fill="#fff">abc</text>
</svg>
<!--/VIDEO-->
<div class="abs" style="left:373.200px;top:497.600px;width:319.300px;height:92px;overflow:hidden"><svg class="abs" style="left:0;top:0" width="319.300" height="179"><use href="#sbgt" width="319.300" height="179"/></svg></div>
<div class="abs st" style="right:352.6px;top:527.35px;font-size:13.7px;transform:scaleX(0.9282);transform-origin:right center;color:#fff">INTRODUCTION</div>
<div class="abs st" style="left:398.2px;top:556.60px;font-size:6.6px;transform:scaleX(1.0978);transform-origin:left center;color:#fff">Because of the epidemic of coronavirus illness (COVID-19), the world and Philippine</div>
<div class="abs st" style="left:398.2px;top:563.90px;font-size:6.6px;transform:scaleX(1.1051);transform-origin:left center;color:#fff">economies have been seriously impacted. Micro, Small, and Medium-Sized</div>
<div class="abs st" style="left:398.2px;top:571.20px;font-size:6.6px;transform:scaleX(1.0813);transform-origin:left center;color:#fff">Enterprises (MSMEs) are among the most severe victims of the COVID-19 epidemic</div>
<div class="abs st" style="left:398.2px;top:578.50px;font-size:6.6px;transform:scaleX(0.9962);transform-origin:left center;color:#fff">(MSMEs).</div>
<div class="abs" style="left:393px;top:559px;width:1.600px;height:1.600px;border-radius:50%;background:#fff"></div>
<svg class="abs" style="left:725.3px;top:256.5px;border-radius:2px" width="314" height="176.7"><use href="#sbg" width="314" height="176.7"/></svg>
<div class="abs st" style="left:775.9px;top:303.71px;font-size:17.6px;transform:scaleX(1.0210);color:#fff;-webkit-text-stroke:.3px #000">IMPACT OF COVID 19</div>
<div class="abs st" style="left:775.9px;top:322.61px;font-size:17.6px;transform:scaleX(0.9594);color:#fff;-webkit-text-stroke:.3px #000">PANDEMIC TO THE MSMES</div>
<div class="abs st" style="left:775.9px;top:341.51px;font-size:17.6px;transform:scaleX(0.9721);color:#fff;-webkit-text-stroke:.3px #000">IN ILOCOS NORTE</div>
<div class="abs st" style="left:775.9px;top:360.41px;font-size:17.6px;transform:scaleX(0.8853);color:#fff;-webkit-text-stroke:.3px #000">PHILIPPINES</div>
<div class="abs st" style="left:780.9px;top:384.45px;font-size:6.1px;transform:scaleX(1.0202);transform-origin:left center;color:#fff">Eric S. Parilla, DBA, FBE</div>
<!--/PPSLIDES-->
<!--PPSTATUS-->
<div class="abs ss" style="left:368.300px">Slide 1 of 22</div>
<div class="abs ss" style="left:432.300px">English (United States)</div>
<div class="abs ss" style="left:681px">Notes</div>
<div class="abs ss" style="left:731.500px">Comments</div>
<svg class="abs" style="left:660px;top:589px" width="260" height="17" viewBox="660 589 260 17">
<path d="M667.500 596.300h9.500M667.500 598.600h9.500M667.500 600.900h9.500" stroke="#777" stroke-width="1"/><path d="M670 594.300l2.200-2 2.200 2z" fill="#777"/>
<path d="M718.800 592.500h9.400v6.400h-4.700l-2.500 2.500v-2.500h-2.200z" fill="#666"/>
<rect x="782.400" y="589.800" width="24.900" height="15.200" fill="#a3a1a1"/>
<rect x="790.500" y="592.300" width="8.800" height="9.800" fill="#fff"/><rect x="792" y="594" width="5.800" height="4" fill="#a3a1a1"/><path d="M792 600h5.800" stroke="#a3a1a1" stroke-width=".9"/>
<g fill="#666"><rect x="815" y="593.300" width="4.300" height="3"/><rect x="820.800" y="593.300" width="4.300" height="3"/><rect x="815" y="598.300" width="4.300" height="3"/><rect x="820.800" y="598.300" width="4.300" height="3"/></g>
<rect x="840.300" y="593" width="10.400" height="8.600" fill="none" stroke="#666" stroke-width=".9"/><path d="M845.500 593v8.600M842 595.500h2M842 597.500h2M847 595.500h2M847 597.500h2" stroke="#666" stroke-width=".7"/>
<rect x="866.300" y="593.300" width="10" height="5.800" fill="none" stroke="#666" stroke-width=".9"/><path d="M865.300 593h12M871.300 599v3M869 602.300h4.600" stroke="#666" stroke-width=".9"/>
<path d="M890 597.400h4.600" stroke="#666" stroke-width="1.100"/><path d="M899 597.600h12" stroke="#aaa" stroke-width="1.600"/>
</svg>
<!--/PPSTATUS-->
</div>
<div id="zshadow" class="abs" style="left:357px;top:20px;width:11px;height:585px;background:linear-gradient(90deg,rgba(0,0,0,.28),rgba(0,0,0,.1) 45%,rgba(0,0,0,0))"></div>
<!--ZOOM-->
<div id="zoom" class="abs">
<div id="ztitle" class="abs">Zoom Meeting</div>
<div class="tl" style="left:6px;background:#ee5b54"></div>
<div class="tl" style="left:19.500px;background:#f5b92f"></div>
<div class="tl" style="left:34px;background:#2fc23f"></div>
<div class="abs" style="left:9px;top:25px;width:80px;height:19px;border-radius:3px;background:#1f1d28"></div>
<svg class="abs" style="left:15px;top:30px" width="14" height="10" viewBox="0 0 14 10"><path d="M3.200 9.300a2.800 2.800 0 0 1-.5-5.500 3.100 3.100 0 0 1 5.800-1.500 2.500 2.500 0 0 1 2.800 2.300 2.400 2.400 0 0 1-.6 4.700z" fill="#e6dede"/><circle cx="6.700" cy="5.400" r="1.300" fill="#e8384a"/></svg>
<div class="abs" style="left:33.500px;top:26px;font-size:9.300px;line-height:18px;color:#f4f4f4;letter-spacing:-.1px">Recording...</div>
<!--TILE1-->
<svg class="abs" style="left:92.300px;top:62.900px" width="165.200" height="95.200" viewBox="0 0 165 95">
<defs>
<radialGradient id="t1bg" cx=".5" cy=".5" r=".75"><stop offset="0" stop-color="#fff"/><stop offset=".78" stop-color="#fefffa"/><stop offset="1" stop-color="#eef4c4"/></radialGradient>
<filter id="tb" x="-10%" y="-10%" width="120%" height="120%"><feGaussianBlur stdDeviation=".45"/></filter>
<clipPath id="t1c"><rect x="1.500" y="1.500" width="162" height="92"/></clipPath>
</defs>
<rect width="165" height="95" fill="#c6de6e"/>
<rect x="1.500" y="1.500" width="162" height="92" fill="url(#t1bg)"/>
<g clip-path="url(#t1c)">
<g filter="url(#tb)">
<!-- man -->
<path d="M55 95C58 84 68 80 82 77L88 72H102L108 77C120 80 128 84 131 95Z" fill="#c4c8cc"/>
<path d="M80 78L88 71 95 80 102 71 110 78 106 95H84Z" fill="#2e5a94"/>
<path d="M89 74h12l-2 8-4 3-4-3z" fill="#7a4a38"/>
<path d="M91 86h8v9h-8z" fill="#e8ecf0"/>
<ellipse cx="94.700" cy="57" rx="12.500" ry="17" fill="#8e5c48"/>
<path d="M81 55C79 40 84 33.500 95 33.500C106 33.500 110 41 108.500 55C107 47 104 43 95 43C86 43 83 47 81 55Z" fill="#1a1616"/>
<path d="M87 56h5M98 56h5" stroke="#2a1a14" stroke-width="1.100"/>
<path d="M91 67c2.500 1 5 1 7.500 0" stroke="#5a2a20" stroke-width="1" fill="none"/>
<path d="M81.500 58c-2 0-2 7 0 7M108 58c2 0 2 7 0 7" stroke="#222" stroke-width="1.600" fill="none"/>
<!-- photo circle -->
<circle cx="23.500" cy="42.600" r="11.300" fill="#7a4a22"/>
<path d="M14 50c2-5 6-7 9.500-7s8 2 10 7c-2 3-6 4.500-10 4.500s-8-1.500-9.500-4.500z" fill="#e86418"/>
<ellipse cx="24" cy="38.500" rx="4.600" ry="5.600" fill="#d8a080"/>
<path d="M19.300 37c0-4 2-6 5-6s5 2 4.600 6c-1-2.500-2.600-3.500-4.800-3.500s-4 1-4.800 3.500z" fill="#2a1a14"/>
<circle cx="23.500" cy="42.600" r="11.300" fill="none" stroke="#fff" stroke-width=".8"/>
</g>
<rect x="2.800" y="19" width="43.200" height="10" rx="1" fill="#20606c"/>
<rect x="4.700" y="55" width="47.800" height="13" fill="#20606c"/>
<rect x="4.300" y="81" width="44.500" height="13" fill="#20606c"/>
<path d="M17.500 5.500a3 3 0 0 1 3 3M17.500 3.800a4.700 4.700 0 0 1 4.700 4.700" stroke="#1c2a4a" stroke-width=".8" fill="none"/>
<g font-family="'Liberation Sans',sans-serif" font-weight="bold">
<text x="7.500" y="8.600" font-size="4" fill="#e8882a" textLength="8.500" lengthAdjust="spacingAndGlyphs">IRAJ</text>
<text x="4.700" y="14.400" font-size="6.800" fill="#1c2a5a" textLength="29.200" lengthAdjust="spacingAndGlyphs">WEBINARS</text>
<text x="5" y="16.600" font-size="1.500" fill="#555" textLength="28" lengthAdjust="spacingAndGlyphs">ABOVE AND BEYOND THE ORDINARY</text>
<text x="4.200" y="26" font-size="5.200" fill="#fff" textLength="40.500" lengthAdjust="spacingAndGlyphs">EXPERT SPEAKER</text>
<text x="28.600" y="61" font-size="4.600" fill="#fff" text-anchor="middle">Professor,</text>
<text x="28.600" y="66.500" font-size="3.700" fill="#fff" text-anchor="middle" textLength="44" lengthAdjust="spacingAndGlyphs">Dr Eric Santos Parilla</text>
<text x="26.500" y="87" font-size="4.600" fill="#fff" text-anchor="middle" textLength="33" lengthAdjust="spacingAndGlyphs">Organized by:</text>
<text x="26.500" y="93.200" font-size="4.400" fill="#fff" text-anchor="middle" textLength="35" lengthAdjust="spacingAndGlyphs">IRAJ WEBINARS</text>
<text x="67.500" y="9.200" font-size="6" fill="#c82a5c" textLength="68" lengthAdjust="spacingAndGlyphs">International Webinar on</text>
<text x="66.600" y="16.300" font-size="4.600" fill="#3a3a3a" textLength="71.500" lengthAdjust="spacingAndGlyphs">“Impact of Pandemic to MSMEs ”</text>
</g>
</g>
</svg>
<!--/TILE1-->
<!--TILE2-->
<svg class="abs" style="left:94.800px;top:159.500px" width="159.800" height="90" viewBox="0 0 160 90">
<defs>
<radialGradient id="t2in" cx=".5" cy=".5" r=".5"><stop offset="0" stop-color="#fbe6e8"/><stop offset=".45" stop-color="#f0b0b8"/><stop offset=".8" stop-color="#dc6878"/><stop offset="1" stop-color="#c43a4c"/></radialGradient>
<clipPath id="t2c"><rect width="160" height="90"/></clipPath>
<path id="t2arc" d="M35.600 66.600A49 49 0 1 1 124.400 66.600"/>
</defs>
<rect width="160" height="90" fill="#fff"/>
<g clip-path="url(#t2c)">
<g filter="url(#tb)">
<!-- scalloped seal -->
<path d="M152.0 45.0 L151.9 46.3 L151.5 47.5 L151.0 48.7 L150.3 49.9 L149.4 51.1 L148.5 52.2 L147.5 53.3 L146.5 54.4 L145.6 55.4 L144.8 56.4 L144.2 57.5 L143.7 58.5 L143.3 59.6 L143.2 60.8 L143.2 61.9 L143.4 63.2 L143.7 64.5 L144.1 65.8 L144.5 67.2 L144.9 68.6 L145.3 70.1 L145.5 71.5 L145.6 72.8 L145.5 74.2 L145.2 75.4 L144.7 76.6 L144.0 77.6 L143.1 78.6 L142.0 79.4 L140.8 80.1 L139.5 80.8 L138.2 81.4 L136.8 81.9 L135.5 82.4 L134.3 83.0 L133.1 83.6 L132.1 84.3 L131.2 85.0 L130.5 85.9 L130.0 86.9 L129.5 88.0 L129.2 89.3 L128.9 90.6 L128.7 92.0 L128.4 93.4 L128.2 94.9 L127.8 96.3 L127.4 97.6 L126.8 98.9 L126.1 100.0 L125.3 100.9 L124.3 101.7 L123.2 102.3 L121.9 102.7 L120.6 103.0 L119.2 103.1 L117.7 103.1 L116.2 103.0 L114.8 102.9 L113.4 102.8 L112.0 102.8 L110.8 102.9 L109.6 103.1 L108.5 103.4 L107.5 104.0 L106.6 104.7 L105.7 105.5 L104.9 106.5 L104.0 107.6 L103.2 108.8 L102.4 110.0 L101.5 111.2 L100.6 112.3 L99.6 113.3 L98.5 114.1 L97.4 114.7 L96.2 115.2 L95.0 115.4 L93.7 115.3 L92.4 115.1 L91.0 114.7 L89.7 114.1 L88.4 113.5 L87.1 112.8 L85.9 112.0 L84.6 111.4 L83.4 110.8 L82.3 110.4 L81.1 110.1 L80.0 110.0 L78.9 110.1 L77.7 110.4 L76.6 110.8 L75.4 111.4 L74.1 112.0 L72.9 112.8 L71.6 113.5 L70.3 114.1 L69.0 114.7 L67.6 115.1 L66.3 115.3 L65.0 115.4 L63.8 115.2 L62.6 114.7 L61.5 114.1 L60.4 113.3 L59.4 112.3 L58.5 111.2 L57.6 110.0 L56.8 108.8 L56.0 107.6 L55.1 106.5 L54.3 105.5 L53.4 104.7 L52.5 104.0 L51.5 103.4 L50.4 103.1 L49.2 102.9 L48.0 102.8 L46.6 102.8 L45.2 102.9 L43.8 103.0 L42.3 103.1 L40.8 103.1 L39.4 103.0 L38.1 102.7 L36.8 102.3 L35.7 101.7 L34.7 100.9 L33.9 100.0 L33.2 98.9 L32.6 97.6 L32.2 96.3 L31.8 94.9 L31.6 93.4 L31.3 92.0 L31.1 90.6 L30.8 89.3 L30.5 88.0 L30.0 86.9 L29.5 85.9 L28.8 85.0 L27.9 84.3 L26.9 83.6 L25.7 83.0 L24.5 82.4 L23.2 81.9 L21.8 81.4 L20.5 80.8 L19.2 80.1 L18.0 79.4 L16.9 78.6 L16.0 77.6 L15.3 76.6 L14.8 75.4 L14.5 74.2 L14.4 72.8 L14.5 71.5 L14.7 70.1 L15.1 68.6 L15.5 67.2 L15.9 65.8 L16.3 64.5 L16.6 63.2 L16.8 61.9 L16.8 60.8 L16.7 59.6 L16.3 58.5 L15.8 57.5 L15.2 56.4 L14.4 55.4 L13.5 54.4 L12.5 53.3 L11.5 52.2 L10.6 51.1 L9.7 49.9 L9.0 48.7 L8.5 47.5 L8.1 46.3 L8.0 45.0 L8.1 43.7 L8.5 42.5 L9.0 41.3 L9.7 40.1 L10.6 38.9 L11.5 37.8 L12.5 36.7 L13.5 35.6 L14.4 34.6 L15.2 33.6 L15.8 32.5 L16.3 31.5 L16.7 30.4 L16.8 29.2 L16.8 28.1 L16.6 26.8 L16.3 25.5 L15.9 24.2 L15.5 22.8 L15.1 21.4 L14.7 19.9 L14.5 18.5 L14.4 17.2 L14.5 15.8 L14.8 14.6 L15.3 13.4 L16.0 12.4 L16.9 11.4 L18.0 10.6 L19.2 9.9 L20.5 9.2 L21.8 8.6 L23.2 8.1 L24.5 7.6 L25.7 7.0 L26.9 6.4 L27.9 5.7 L28.8 5.0 L29.5 4.1 L30.0 3.1 L30.5 2.0 L30.8 0.7 L31.1 -0.6 L31.3 -2.0 L31.6 -3.4 L31.8 -4.9 L32.2 -6.3 L32.6 -7.6 L33.2 -8.9 L33.9 -10.0 L34.7 -10.9 L35.7 -11.7 L36.8 -12.3 L38.1 -12.7 L39.4 -13.0 L40.8 -13.1 L42.3 -13.1 L43.8 -13.0 L45.2 -12.9 L46.6 -12.8 L48.0 -12.8 L49.2 -12.9 L50.4 -13.1 L51.5 -13.4 L52.5 -14.0 L53.4 -14.7 L54.3 -15.5 L55.1 -16.5 L56.0 -17.6 L56.8 -18.8 L57.6 -20.0 L58.5 -21.2 L59.4 -22.3 L60.4 -23.3 L61.5 -24.1 L62.6 -24.7 L63.8 -25.2 L65.0 -25.4 L66.3 -25.3 L67.6 -25.1 L69.0 -24.7 L70.3 -24.1 L71.6 -23.5 L72.9 -22.8 L74.1 -22.0 L75.4 -21.4 L76.6 -20.8 L77.7 -20.4 L78.9 -20.1 L80.0 -20.0 L81.1 -20.1 L82.3 -20.4 L83.4 -20.8 L84.6 -21.4 L85.9 -22.0 L87.1 -22.8 L88.4 -23.5 L89.7 -24.1 L91.0 -24.7 L92.4 -25.1 L93.7 -25.3 L95.0 -25.4 L96.2 -25.2 L97.4 -24.7 L98.5 -24.1 L99.6 -23.3 L100.6 -22.3 L101.5 -21.2 L102.4 -20.0 L103.2 -18.8 L104.0 -17.6 L104.9 -16.5 L105.7 -15.5 L106.6 -14.7 L107.5 -14.0 L108.5 -13.4 L109.6 -13.1 L110.8 -12.9 L112.0 -12.8 L113.4 -12.8 L114.8 -12.9 L116.2 -13.0 L117.7 -13.1 L119.2 -13.1 L120.6 -13.0 L121.9 -12.7 L123.2 -12.3 L124.3 -11.7 L125.3 -10.9 L126.1 -10.0 L126.8 -8.9 L127.4 -7.6 L127.8 -6.3 L128.2 -4.9 L128.4 -3.4 L128.7 -2.0 L128.9 -0.6 L129.2 0.7 L129.5 2.0 L130.0 3.1 L130.5 4.1 L131.2 5.0 L132.1 5.7 L133.1 6.4 L134.3 7.0 L135.5 7.6 L136.8 8.1 L138.2 8.6 L139.5 9.2 L140.8 9.9 L142.0 10.6 L143.1 11.4 L144.0 12.4 L144.7 13.4 L145.2 14.6 L145.5 15.8 L145.6 17.2 L145.5 18.5 L145.3 19.9 L144.9 21.4 L144.5 22.8 L144.1 24.2 L143.7 25.5 L143.4 26.8 L143.2 28.1 L143.2 29.2 L143.3 30.4 L143.7 31.5 L144.2 32.5 L144.8 33.6 L145.6 34.6 L146.5 35.6 L147.5 36.7 L148.5 37.8 L149.4 38.9 L150.3 40.1 L151.0 41.3 L151.5 42.5 L151.9 43.7Z" fill="#e01818"/>
<circle cx="80" cy="45" r="57.700" fill="#f2c41c"/>
<circle cx="80" cy="45" r="57.700" fill="none" stroke="#7a3a10" stroke-width=".8"/>
<circle cx="80" cy="45" r="45" fill="url(#t2in)"/>
<circle cx="80" cy="45" r="45" fill="none" stroke="#7a3a10" stroke-width=".8"/>
<g stroke="#f4c8cc" stroke-width="2.500" opacity=".45"><path d="M80 45L40 12M80 45L60 2M80 45L100 2M80 45L122 14M80 45L36 40M80 45L124 40"/></g>
<!-- book -->
<path d="M92 24C100 21 112 24 122 30L112 72C104 68 98 68 92 70Z" fill="#fbfbfb"/>
<path d="M122 30l3 1-10 43-3-2z" fill="#c02030"/>
<path d="M40 62l14-4 6 8-14 6z" fill="#fbfbfb"/>
<path d="M40 62l-2 2 8 10 0-2z" fill="#c02030"/>
<!-- ribbons -->
<path d="M38 56c4 2 9 2 12-2l2 4c-3 4-9 5-14 3z" fill="#f6d21c"/>
<path d="M96 58c8 6 18 4 24-1l2 5c-7 6-18 8-27 2z" fill="#f6d21c"/>
<path d="M98 66c4 5 12 6 18 2l0 5c-6 3-14 2-19-3z" fill="#f6d21c"/>
<!-- person -->
<path d="M36 92C40 78 52 75 66 72L90 72C106 75 132 78 138 92Z" fill="#1c2452"/>
<path d="M68 70h20v8c-6 4-14 4-20 0z" fill="#c89878"/>
<path d="M56 50C52 28 62 19 78 19.500C94 20 103 30 99 50C98 58 96 66 90 66H66C60 66 57 58 56 50Z" fill="#1c1818"/>
<path d="M61 44C60 34 66 27 78 27C90 27 95 34 94.500 44C94 58 88 72 78 72C68 72 62 58 61 44Z" fill="#d8a888"/>
<path d="M61 40C62 30 68 25 78 25C88 25 94 30 95 40C90 33 84 31 78 31.500C70 32 65 34 61 40Z" fill="#1c1818"/>
<rect x="64" y="42" width="11" height="7" rx="2" fill="#6a3a7a" fill-opacity=".55" stroke="#2a1a2a" stroke-width="1.200"/>
<rect x="80" y="42" width="11" height="7" rx="2" fill="#6a3a7a" fill-opacity=".55" stroke="#2a1a2a" stroke-width="1.200"/>
<path d="M75 44.500h5" stroke="#2a1a2a" stroke-width="1"/>
<path d="M73 62c3 1 7 1 10 0" stroke="#9a5a4a" stroke-width="1.200" fill="none"/>
<rect x="53" y="40" width="7" height="18" rx="3.500" fill="#141414"/><rect x="96" y="40" width="7" height="18" rx="3.500" fill="#141414"/>
</g>
<g font-family="'Liberation Serif',serif" font-weight="bold" font-size="10.500" fill="#3a1c08">
<text><textPath href="#t2arc" startOffset="0" textLength="199" lengthAdjust="spacing">NORTHWESTERN UNIVERSITY</textPath></text>
</g>
<g filter="url(#tb)">
<path d="M61 44C60 34 66 27 78 27C90 27 95 34 94.500 44" fill="none"/>
</g>
</g>
</svg>
<!--/TILE2-->
<!--TILE3-->
<div class="tile" style="top:253.500px;left:95px"></div>
<svg class="abs" style="left:141px;top:253.500px" width="67" height="90" viewBox="0 0 67 90">
<defs><linearGradient id="t3bg" x1="0" y1="0" x2="1" y2="1"><stop offset="0" stop-color="#c4bebc"/><stop offset=".5" stop-color="#d8d4d4"/><stop offset="1" stop-color="#e6e2e2"/></linearGradient></defs>
<rect width="67" height="90" fill="url(#t3bg)"/>
<g filter="url(#tb)">
<path d="M28 0H67V17L30 9Z" fill="#c6c0bc"/>
<path d="M30 9L65.600 16.500 55.300 38 28 26Z" fill="#8c8682"/>
<path d="M28 26l27.300 12-1.500 3L27 29z" fill="#5a5654"/>
<path d="M27 29l26 11-4 4-24-9z" fill="#eeeef4"/>
<path d="M31 34L20 62 24 62 36 37Z" fill="#f6f6fc"/>
<path d="M27 0L17 58 22 60 31 9Z" fill="#cac4c2"/>
<path d="M0 16.500L13 28.700 4.700 59.600 0 54Z" fill="#2c2c3a"/>
<path d="M0 19L10.500 29.500 3.500 55 0 51Z" fill="#44465a"/>
<path d="M0 56L6 62 20 58 17 66 0 80Z" fill="#c0bab8"/>
<path d="M37.500 70.500L67 73V87.800L37.500 84Z" fill="#ece8e0"/>
<path d="M39 78.500l28 3M39 80.500l28 3M39 82.500l28 3" stroke="#8a8682" stroke-width=".7"/>
<path d="M20 62L14 90H67V88L37.500 84 37.500 72Z" fill="#e4e0e2" opacity=".6"/>
</g>
</svg>
<!--/TILE3-->
<div class="tile" style="top:347px;height:89.500px"></div>
<div class="abs" style="left:95px;top:347.800px;width:160px;height:89px;text-align:center;line-height:89px;font-size:14.800px;color:#f2f2f2;letter-spacing:.1px">Dipti</div>
<div class="tile" style="top:441px;height:89.500px"></div>
<div class="abs" style="left:95px;top:441.500px;width:160px;height:89px;text-align:center;line-height:89px;font-size:14.300px;color:#f2f2f2;letter-spacing:-.15px">Thanmai Vulasi</div>
<div class="abs" style="left:95px;top:517px;width:104px;height:16px;background:#161616;font-size:9.600px;line-height:16px;color:#f0f0f0;padding-left:5.500px;white-space:nowrap">Connecting to audio <span style="letter-spacing:-.5px;font-size:8px;position:relative;top:-1px">.<span style="position:relative;top:-2px">·</span><span style="position:relative;top:-2.500px;font-size:6px">·</span></span></div>
</div>
<!--DOCK-->
<!--DOCKC-->
<svg class="abs" style="left:120px;top:600px" width="790" height="40" viewBox="120 600 790 40">
<defs>
<linearGradient id="dkbg" x1="0" y1="0" x2="1" y2="0"><stop offset="0" stop-color="#7f89c6"/><stop offset=".5" stop-color="#878ccb"/><stop offset=".8" stop-color="#9389c8"/><stop offset="1" stop-color="#9c86c6"/></linearGradient>
<linearGradient id="dfin" x1="0" y1="0" x2="0" y2="1"><stop offset="0" stop-color="#36c2fa"/><stop offset="1" stop-color="#1a78ec"/></linearGradient>
<radialGradient id="dsiri" cx=".5" cy=".5" r=".6"><stop offset="0" stop-color="#5a3aa8"/><stop offset=".7" stop-color="#241848"/><stop offset="1" stop-color="#100c28"/></radialGradient>
<radialGradient id="dsorb" cx=".45" cy=".55" r=".6"><stop offset="0" stop-color="#e8c8f8"/><stop offset=".3" stop-color="#c452d8"/><stop offset=".6" stop-color="#4a58d8"/><stop offset=".85" stop-color="#2a2a88"/><stop offset="1" stop-color="#1a1444"/></radialGradient>
<linearGradient id="dsaf" x1="0" y1="0" x2="0" y2="1"><stop offset="0" stop-color="#3ab0f6"/><stop offset="1" stop-color="#1c6ee0"/></linearGradient>
<linearGradient id="dmail" x1="0" y1="0" x2="0" y2="1"><stop offset="0" stop-color="#3cb4fc"/><stop offset="1" stop-color="#1a78f0"/></linearGradient>
<linearGradient id="dmsgr" x1="0" y1="1" x2="1" y2="0"><stop offset="0" stop-color="#2a7cf8"/><stop offset=".5" stop-color="#9a3cf4"/><stop offset="1" stop-color="#f8526c"/></linearGradient>
<linearGradient id="dgreen" x1="0" y1="0" x2="0" y2="1"><stop offset="0" stop-color="#5ee060"/><stop offset="1" stop-color="#22b83a"/></linearGradient>
<linearGradient id="dmusic" x1="0" y1="0" x2="0" y2="1"><stop offset="0" stop-color="#fb5c74"/><stop offset="1" stop-color="#f4283c"/></linearGradient>
<linearGradient id="dpod" x1="0" y1="0" x2="0" y2="1"><stop offset="0" stop-color="#c86af0"/><stop offset="1" stop-color="#8a2cc8"/></linearGradient>
<linearGradient id="dapp" x1="0" y1="0" x2="0" y2="1"><stop offset="0" stop-color="#2ab4f8"/><stop offset="1" stop-color="#1a68e6"/></linearGradient>
<filter id="db" x="-10%" y="-10%" width="120%" height="120%"><feGaussianBlur stdDeviation=".35"/></filter>
</defs>
<rect x="125.200" y="605.200" width="773.300" height="31.300" rx="8" fill="url(#dkbg)" stroke="#a9afe0" stroke-opacity=".45" stroke-width=".8"/>
<g filter="url(#db)">
<rect x="129.6" y="609.7" width="19.4" height="19.4" rx="4.4" fill="url(#dfin)"/>
<path d="M140.3 609.6999999999999h4.299999999999999a4.400 4.400 0 0 1 4.400 4.400v10.599999999999998a4.400 4.400 0 0 1-4.400 4.400h-6.299999999999999c1-3 1.500-5.500 1.500-8h-3c0-5 1.500-9 3-11.800z" fill="#eef2f8"/>
<path d="M134.8 616.4v2.500M143.8 616.4v2.500" stroke="#1a3a6a" stroke-width="1"/><path d="M133.8 622.9c3.500 3 8 3 11.500 0" stroke="#1a3a6a" stroke-width=".9" fill="none"/>
<rect x="154.7" y="609.7" width="19.4" height="19.4" rx="4.4" fill="url(#dsiri)"/>
<circle cx="164.4" cy="619.4" r="7.400" fill="url(#dsorb)"/><path d="M159.4 620.9c2.500-5 4-5 5-1s3.500 2.500 5-2.500c-1 7-4 7-5.800 3s-2.700-2.500-4.200 .5z" fill="#f4f0ff" opacity=".9"/>
<rect x="179.6" y="609.7" width="19.4" height="19.4" rx="4.4" fill="#dfe0ea"/>
<rect x="182.7" y="612.8" width="3.800" height="3.800" rx="1" fill="#e8503a"/>
<rect x="187.4" y="612.8" width="3.800" height="3.800" rx="1" fill="#f0a030"/>
<rect x="192.1" y="612.8" width="3.800" height="3.800" rx="1" fill="#f0c838"/>
<rect x="182.7" y="617.5" width="3.800" height="3.800" rx="1" fill="#e84a78"/>
<rect x="187.4" y="617.5" width="3.800" height="3.800" rx="1" fill="#5ac85a"/>
<rect x="192.1" y="617.5" width="3.800" height="3.800" rx="1" fill="#38b8e8"/>
<rect x="182.7" y="622.2" width="3.800" height="3.800" rx="1" fill="#9a5ae0"/>
<rect x="187.4" y="622.2" width="3.800" height="3.800" rx="1" fill="#3a8af0"/>
<rect x="192.1" y="622.2" width="3.800" height="3.800" rx="1" fill="#e8843a"/>
<rect x="204.6" y="609.7" width="19.4" height="19.4" rx="4.4" fill="#f2f2f6"/>
<circle cx="214.3" cy="619.4" r="7.900" fill="url(#dsaf)"/><path d="M219.10000000000002 614.6l-6 3.600 2.400 2.400z" fill="#f8f8f8"/><path d="M209.5 624.1999999999999l6-3.600-2.400-2.400z" fill="#f04a3a"/>
<rect x="229.4" y="609.7" width="19.4" height="19.4" rx="4.4" fill="#f4f4f6"/>
<circle cx="239.1" cy="619.4" r="7.800" fill="#e8453c"/><path d="M239.1 619.4L232.35 615.50A7.800 7.800 0 0 0 239.90 627.16z" fill="#2da94f"/><path d="M239.1 619.4L239.90 627.16A7.800 7.800 0 0 0 245.85 615.50z" fill="#fbbc05"/><path d="M239.1 615.8h7.200" stroke="#fbbc05" stroke-width="0"/><circle cx="239.1" cy="619.4" r="3.700" fill="#f4f4f6"/><circle cx="239.1" cy="619.4" r="2.900" fill="#4a8af4"/>
<rect x="254.5" y="609.7" width="19.4" height="19.4" rx="4.4" fill="url(#dmail)"/>
<rect x="257.9" y="615.4" width="12.600" height="8.400" rx="1.200" fill="#f4f8fc"/><path d="M258.2 615.9l6 4.500 6-4.500" stroke="#9ac0e8" stroke-width=".8" fill="none"/>
<rect x="279.5" y="609.7" width="19.4" height="19.4" rx="4.4" fill="#b8915a"/>
<rect x="281.7" y="611.4" width="15" height="16" rx="1.500" fill="#c49a5e"/><circle cx="289.2" cy="617.9" r="3" fill="#ad8148"/><path d="M284.2 624.9c1-4 9-4 10 0z" fill="#ad8148"/><circle cx="289.2" cy="619.4" r="5.800" fill="none" stroke="#b58a52" stroke-width=".8"/>
<rect x="304.2" y="609.7" width="19.4" height="19.4" rx="4.4" fill="#f8f8f8"/>
<path d="M304.2 614.0999999999999a4.400 4.400 0 0 1 4.400-4.400h10.599999999999998a4.400 4.400 0 0 1 4.400 4.400v1.400h-19.4z" fill="#f0483e"/>
<rect x="328.9" y="609.7" width="19.4" height="19.4" rx="4.4" fill="#f8f6ee"/>
<path d="M328.90000000000003 614.0999999999999a4.400 4.400 0 0 1 4.400-4.400h10.599999999999998a4.400 4.400 0 0 1 4.400 4.400v1.800h-19.4z" fill="#f8cc38"/><path d="M328.90000000000003 624.4h19.4" stroke="#e4e0d4" stroke-width=".6"/>
<rect x="353.9" y="609.7" width="19.4" height="19.4" rx="4.4" fill="#e8f0e0"/>
<path d="M354.90000000000003 611.6999999999999c6 0 6 8 3 16.4h-3z" fill="#f4e8b0"/><path d="M364.6 609.6999999999999h4.300a4.400 4.400 0 0 1 4.400 4.400v8c-4-2-8-6-8.700-12.400z" fill="#6ac85a"/><path d="M359.6 609.6999999999999v19.4" stroke="#3a8ae8" stroke-width="2.200"/><path d="M362.6 609.6999999999999c1 8 6 13 10.7 15" stroke="#fff" stroke-width="1.600" fill="none"/><circle cx="359.6" cy="621.9" r="2.300" fill="#fff" stroke="#3a8ae8" stroke-width="1"/><rect x="366.6" y="622.9" width="5" height="4" rx="1" fill="#3a8ae8"/><path d="M353.90000000000003 626.4h19.4" stroke="#f0c848" stroke-width="1.200"/>
<rect x="378.9" y="609.7" width="19.4" height="19.4" rx="4.4" fill="#f8f8f8"/>
<circle cx="383.40000000000003" cy="614.4" r="1.500" fill="#3a8af0"/><path d="M386.6 614.4h8.500" stroke="#dcdcdc" stroke-width=".9"/>
<circle cx="383.40000000000003" cy="619.4" r="1.500" fill="#f0483e"/><path d="M386.6 619.4h8.500" stroke="#dcdcdc" stroke-width=".9"/>
<circle cx="383.40000000000003" cy="624.4" r="1.500" fill="#f0a030"/><path d="M386.6 624.4h8.500" stroke="#dcdcdc" stroke-width=".9"/>
<rect x="403.9" y="609.7" width="19.4" height="19.4" rx="4.4" fill="#f8f8fa"/>
<path d="M413.6 611.8a7.400 7.200 0 0 1 0 14.400c-1 0-2-.2-3-.5l-2.800 1.300v-2.900a7.400 7.200 0 0 1 5.800-12.300z" fill="url(#dmsgr)"/><path d="M409.0 621.4l3.200-4 2.500 2 3.500-2.500-3.200 4-2.500-2z" fill="#fff"/>
<rect x="428.8" y="609.7" width="19.4" height="19.4" rx="4.4" fill="#f8f8f8"/>
<ellipse cx="438.50" cy="615.50" rx="2.200" ry="3.700" transform="rotate(0 438.50 615.50)" fill="#f8b42a" opacity=".85"/>
<ellipse cx="441.26" cy="616.64" rx="2.200" ry="3.700" transform="rotate(45 441.26 616.64)" fill="#f0e040" opacity=".85"/>
<ellipse cx="442.40" cy="619.40" rx="2.200" ry="3.700" transform="rotate(90 442.40 619.40)" fill="#a8d848" opacity=".85"/>
<ellipse cx="441.26" cy="622.16" rx="2.200" ry="3.700" transform="rotate(135 441.26 622.16)" fill="#4ac8a8" opacity=".85"/>
<ellipse cx="438.50" cy="623.30" rx="2.200" ry="3.700" transform="rotate(180 438.50 623.30)" fill="#4a9af0" opacity=".85"/>
<ellipse cx="435.74" cy="622.16" rx="2.200" ry="3.700" transform="rotate(225 435.74 622.16)" fill="#9a6ae0" opacity=".85"/>
<ellipse cx="434.60" cy="619.40" rx="2.200" ry="3.700" transform="rotate(270 434.60 619.40)" fill="#e85a9a" opacity=".85"/>
<ellipse cx="435.74" cy="616.64" rx="2.200" ry="3.700" transform="rotate(315 435.74 616.64)" fill="#f06a3a" opacity=".85"/>
<rect x="453.8" y="609.7" width="19.4" height="19.4" rx="4.4" fill="url(#dgreen)"/>
<ellipse cx="463.5" cy="618.8" rx="6.800" ry="5.600" fill="#f2f8f2"/><path d="M459.0 622.4c0 2-1 3-2.200 3.600 2 .2 4-.6 5-2z" fill="#f2f8f2"/>
<rect x="478.8" y="609.7" width="19.4" height="19.4" rx="4.4" fill="url(#dgreen)"/>
<rect x="482.0" y="615.8" width="8.600" height="7.200" rx="1.800" fill="#f2f8f2"/><path d="M491.3 618.6l3.700-2.400v6.400l-3.700-2.400z" fill="#f2f8f2"/>
<rect x="503.6" y="609.7" width="19.4" height="19.4" rx="4.4" fill="#faf8f2"/>
<path d="M508.79999999999995 624.9l1-3 7-9.500 2 1.500-7 9.500z" fill="#e8a838"/><path d="M508.79999999999995 624.9l1-3 2 1.500z" fill="#3a3a3a"/><path d="M516.8 612.4l2 1.500" stroke="#6a4a2a" stroke-width="1.200"/><path d="M506.79999999999995 612.9l1.200-.6M508.29999999999995 614.4l1.200-.6" stroke="#e8a838" stroke-width="1"/>
<rect x="528.2" y="609.7" width="19.4" height="19.4" rx="4.4" fill="#f8f8f8"/>
<rect x="531.3" y="620.6999999999999" width="2.800" height="5" fill="#e8483c"/>
<rect x="534.7" y="617.1999999999999" width="2.800" height="8.5" fill="#f0a030"/>
<rect x="538.1" y="613.1999999999999" width="2.800" height="12.5" fill="#3ab848"/>
<rect x="541.5" y="617.6999999999999" width="2.800" height="8" fill="#3a8ae8"/>
<rect x="553.1" y="609.7" width="19.4" height="19.4" rx="4.4" fill="#f8f8f8"/>
<path d="M557.0 612.9h11.600l-1 6h-9.600z" fill="#3a9ae8"/><path d="M559.3 614.4h7" stroke="#9ad0f8" stroke-width=".8"/><path d="M562.8 618.9v6.500M559.3 625.6999999999999h7" stroke="#b8a070" stroke-width="1.100"/>
<rect x="578.0" y="609.7" width="19.4" height="19.4" rx="4.4" fill="url(#dmusic)"/>
<path d="M585.2 622.9v-8.500l6.500-1.500v8.500" stroke="#fff" stroke-width="1.200" fill="none"/><path d="M585.2 616.1999999999999l6.500-1.500" stroke="#fff" stroke-width="2"/><ellipse cx="583.8000000000001" cy="623.1" rx="1.900" ry="1.500" fill="#fff"/><ellipse cx="590.3000000000001" cy="621.6" rx="1.900" ry="1.500" fill="#fff"/>
<rect x="603.0" y="609.7" width="19.4" height="19.4" rx="4.4" fill="url(#dpod)"/>
<circle cx="612.7" cy="617.9" r="5.800" fill="none" stroke="#fff" stroke-width="1.100"/><circle cx="612.7" cy="617.9" r="3.300" fill="none" stroke="#fff" stroke-width="1"/><circle cx="612.7" cy="617.8" r="1.400" fill="#fff"/><path d="M611.5 620.9h2.400l-.5 5.500h-1.400z" fill="#fff" stroke="#a040d0" stroke-width=".5"/>
<rect x="627.9" y="609.7" width="19.4" height="19.4" rx="4.4" fill="url(#dapp)"/>
<path d="M633.4 624.4l5.600-10M641.8000000000001 624.4l-5.600-10M631.1 621.4h13" stroke="#fff" stroke-width="1.500" stroke-linecap="round" fill="none"/>
<rect x="652.8" y="609.7" width="19.4" height="19.4" rx="4.4" fill="#9a9a9e"/>
<circle cx="662.5" cy="619.4" r="7.800" fill="#2c2c30"/><circle cx="662.5" cy="619.4" r="6" fill="none" stroke="#8a8a8e" stroke-width="1.400"/><circle cx="662.5" cy="619.4" r="3.300" fill="none" stroke="#8a8a8e" stroke-width="1"/><path d="M662.5 619.4l6 0M662.5 619.4l-3-5.200M662.5 619.4l-3 5.200" stroke="#8a8a8e" stroke-width="1"/>
</g>
<path d="M705.600 609v21M816.500 609v21" stroke="#6c6aa8" stroke-width=".8"/>
<g filter="url(#db)">
<rect x="713.5" y="609.7" width="19.4" height="19.4" rx="4.4" fill="#f6f6f8"/>
<rect x="719.7" y="612.4" width="10.500" height="14" rx="1" fill="#2a6ad0"/><rect x="719.7" y="612.4" width="10.500" height="3.500" fill="#4a9af0"/><rect x="719.7" y="622.9" width="10.500" height="3.500" rx="1" fill="#1a4aa0"/><rect x="715.9000000000001" y="615.4" width="8" height="8" rx="1" fill="#1c58b8"/>
<rect x="738.5" y="609.7" width="19.4" height="19.4" rx="4.4" fill="#3a84f6"/>
<rect x="741.9000000000001" y="615.8" width="8.600" height="7.200" rx="1.800" fill="#fff"/><path d="M751.2 618.6l3.500-2.400v6.400l-3.500-2.400z" fill="#fff"/>
<rect x="763.5" y="609.7" width="19.4" height="19.4" rx="4.4" fill="#f6f6f8"/>
<rect x="769.7" y="612.4" width="10.500" height="14" rx="1" fill="#1c8a4a"/><rect x="774.9000000000001" y="612.4" width="5.300" height="7" fill="#3ac070"/><rect x="769.7" y="619.4" width="5.300" height="7" fill="#146a38"/><rect x="765.9000000000001" y="615.4" width="8" height="8" rx="1" fill="#147a3e"/>
<rect x="788.3" y="609.7" width="19.4" height="19.4" rx="4.4" fill="#f6f6f8"/>
<circle cx="799.5" cy="619.4" r="6.800" fill="#e0583a"/><path d="M799.5 619.4v-6.800a6.800 6.800 0 0 1 6.800 6.800z" fill="#f49070"/><rect x="790.7" y="615.4" width="8" height="8" rx="1" fill="#c8401e"/>
<path d="M822.8 611.9h7l2 2h14v14.500h-23z" fill="#4aa8e0"/><rect x="822.8" y="615.4" width="23" height="13" rx="1" fill="#6ac4f4"/><circle cx="834.3" cy="621.9" r="3.300" fill="none" stroke="#3a90d0" stroke-width="1"/><path d="M834.3 620.1999999999999v3.200M832.8 622.1999999999999l1.500 1.500 1.500-1.500" stroke="#3a90d0" stroke-width=".9" fill="none"/>
<rect x="848.2" y="613.1999999999999" width="22.800" height="13" fill="#f8f6f6" stroke="#d8d0d0" stroke-width=".5"/><path d="M851.6 616.4h8M854.6 619.4h10M854.6 621.9h8" stroke="#e0b8b0" stroke-width=".8"/><rect x="863.1" y="622.4" width="7" height="7.500" rx="1" fill="#f8f8f8"/><circle cx="866.6" cy="626.1999999999999" r="2.600" fill="#d8502e"/>
<path d="M876.6 612.9h16l-1.800 15.500a1.500 1.500 0 0 1-1.500 1.300h-9.400a1.500 1.500 0 0 1-1.500-1.300z" fill="#d4d2e2" fill-opacity=".85" stroke="#bcbcd0" stroke-width=".5"/><ellipse cx="884.6" cy="612.9" rx="8" ry="2.200" fill="#cacad2"/><path d="M879.6 611.9l3-1.500 2 1.500 3-2 2 2.500" stroke="#f4f4f8" stroke-width="1.300" fill="none"/>
</g>
<circle cx="139.3" cy="633.300" r="1" fill="#10101c"/>
<circle cx="239" cy="633.300" r="1" fill="#10101c"/>
<circle cx="313.5" cy="633.300" r="1" fill="#10101c"/>
<circle cx="413.2" cy="633.300" r="1" fill="#10101c"/>
<circle cx="723.2" cy="633.300" r="1" fill="#10101c"/>
<circle cx="748.2" cy="633.300" r="1" fill="#10101c"/>
<circle cx="773.2" cy="633.300" r="1" fill="#10101c"/>
<circle cx="798" cy="633.300" r="1" fill="#10101c"/>
</svg>
<div class="abs" style="left:304.200px;top:610.200px;width:19.400px;text-align:center;font-size:3.600px;line-height:4.500px;color:#fff;font-weight:bold">AUG</div>
<div class="abs" style="left:304.200px;top:615.300px;width:19.400px;text-align:center;font-size:12.500px;line-height:13px;color:#3a3a3a;letter-spacing:-.5px">31</div>
<div class="abs" style="left:677px;top:606.500px;width:20px;text-align:center;font-size:23px;line-height:26px;color:#b8b4de;font-weight:normal">?</div>
<div class="abs" style="left:715.900px;top:615.400px;width:8px;text-align:center;font-size:6px;line-height:8px;color:#fff;font-weight:bold">W</div>
<div class="abs" style="left:765.900px;top:615.400px;width:8px;text-align:center;font-size:6px;line-height:8px;color:#fff;font-weight:bold">X</div>
<div class="abs" style="left:790.700px;top:615.400px;width:8px;text-align:center;font-size:6px;line-height:8px;color:#fff;font-weight:bold">P</div>
<!--/DOCKC-->

<!--MINI-->
<div class="abs" style="left:907.400px;top:561.700px;width:108.300px;height:69.900px;border-radius:3.500px;background:#fdfdfd;box-shadow:0 1px 5px rgba(0,0,0,.35)"></div>
<svg class="abs" style="left:910.200px;top:564.500px" width="102.700" height="63.600" viewBox="0 0 1024 640" preserveAspectRatio="none">
<defs><linearGradient id="mwall" x1="0" y1="0" x2="1" y2="0"><stop offset="0" stop-color="#1c3c70"/><stop offset=".4" stop-color="#2a4a8a"/><stop offset=".8" stop-color="#5a4088"/><stop offset="1" stop-color="#8a3a7c"/></linearGradient>
<linearGradient id="mtop" x1="0" y1="0" x2="1" y2="0"><stop offset="0" stop-color="#7a5aa4"/><stop offset=".5" stop-color="#4a70b8"/><stop offset="1" stop-color="#2478bc"/></linearGradient></defs>
<rect width="1024" height="640" fill="url(#mwall)"/>
<rect width="1024" height="22" fill="url(#mtop)"/>
<rect x="0" y="20" width="8" height="400" fill="#d83060"/>
<rect x="357" y="20" width="667" height="585" fill="#ebeaea"/>
<rect x="357" y="20" width="667" height="36" fill="#d67a63"/>
<rect x="357" y="56" width="667" height="50" fill="#f4f2f2"/>
<rect x="8" y="18" width="349" height="586" fill="#161616"/>
<rect x="8" y="18" width="349" height="20" fill="#efe6ea"/>
<rect x="100" y="81" width="165" height="95" fill="#2a2a2a"/><rect x="110" y="120" width="145" height="10" fill="#e8e8e0"/>
<rect x="103" y="178" width="160" height="90" fill="#fafafa"/><circle cx="183" cy="223" r="46" fill="#e02020"/><circle cx="183" cy="223" r="36" fill="#f0c020"/><circle cx="183" cy="223" r="28" fill="#e08090"/><path d="M150 268c5-25 20-30 33-30s28 5 33 30z" fill="#1c2452"/><circle cx="181" cy="222" r="17" fill="#c89878"/>
<rect x="103" y="272" width="160" height="90" fill="#262626"/><rect x="149" y="272" width="67" height="90" fill="#cfcaca"/>
<rect x="103" y="366" width="160" height="90" fill="#262626"/><rect x="168" y="405" width="30" height="9" fill="#ddd"/>
<rect x="103" y="460" width="160" height="90" fill="#262626"/><rect x="136" y="499" width="94" height="9" fill="#ddd"/>
<use href="#sbg" x="373" y="113" width="319" height="179"/>
<use href="#sbgt" x="373" y="305.500" width="319" height="178.500"/>
<rect x="438" y="362" width="186" height="106" fill="#2a78e0"/><path d="M494 449c2-30 15-40 34-40s32 10 35 40z" fill="#66615e"/><circle cx="528" cy="390" r="13" fill="#d0a088"/><rect x="448" y="449" width="170" height="13" fill="#e8eaf0"/>
<svg x="373" y="497.600" width="319" height="92" viewBox="0 0 319 92" preserveAspectRatio="none"><use href="#sbgt" width="319" height="179"/></svg>
<rect x="575" y="529" width="96" height="10" fill="#999"/><rect x="398" y="556" width="270" height="28" fill="#4a4a4a"/>
<use href="#sbg" x="725" y="256.500" width="314" height="177"/>
<g fill="#9a9a9a"><rect x="425" y="160" width="185" height="13"/><rect x="425" y="180" width="222" height="13"/><rect x="425" y="200" width="151" height="13"/><rect x="425" y="219" width="96" height="13"/><rect x="777" y="305" width="180" height="13"/><rect x="777" y="324" width="217" height="13"/><rect x="777" y="343" width="148" height="13"/><rect x="777" y="362" width="94" height="13"/></g>
<rect x="357" y="590" width="667" height="15" fill="#e6e4e4"/>
<rect x="125" y="605" width="774" height="32" rx="8" fill="#8a8cca"/>
<g fill="#f4f4f8"><rect x="130" y="610" width="19" height="19" fill="#2a90f0"/><rect x="155" y="610" width="19" height="19" fill="#2a2050"/><rect x="180" y="610" width="19" height="19"/><rect x="205" y="610" width="19" height="19"/><rect x="230" y="610" width="19" height="19"/><rect x="255" y="610" width="19" height="19" fill="#2a90f0"/><rect x="280" y="610" width="19" height="19" fill="#b8915a"/><rect x="304" y="610" width="19" height="19"/><rect x="329" y="610" width="19" height="19"/><rect x="354" y="610" width="19" height="19"/><rect x="379" y="610" width="19" height="19"/><rect x="404" y="610" width="19" height="19"/><rect x="429" y="610" width="19" height="19"/><rect x="454" y="610" width="19" height="19" fill="#3ac850"/><rect x="479" y="610" width="19" height="19" fill="#3ac850"/><rect x="504" y="610" width="19" height="19"/><rect x="528" y="610" width="19" height="19"/><rect x="553" y="610" width="19" height="19"/><rect x="578" y="610" width="19" height="19" fill="#f4384c"/><rect x="603" y="610" width="19" height="19" fill="#a040d8"/><rect x="628" y="610" width="19" height="19" fill="#2a88f0"/><rect x="653" y="610" width="19" height="19" fill="#555"/><rect x="714" y="610" width="19" height="19"/><rect x="739" y="610" width="19" height="19" fill="#3a84f6"/><rect x="764" y="610" width="19" height="19"/><rect x="788" y="610" width="19" height="19"/><rect x="823" y="612" width="23" height="16" fill="#5ab8f0"/><rect x="848" y="613" width="23" height="13"/><rect x="876" y="611" width="17" height="18" fill="#dcdce4"/></g>
</svg>
<!--/MINI-->
</body></html>
